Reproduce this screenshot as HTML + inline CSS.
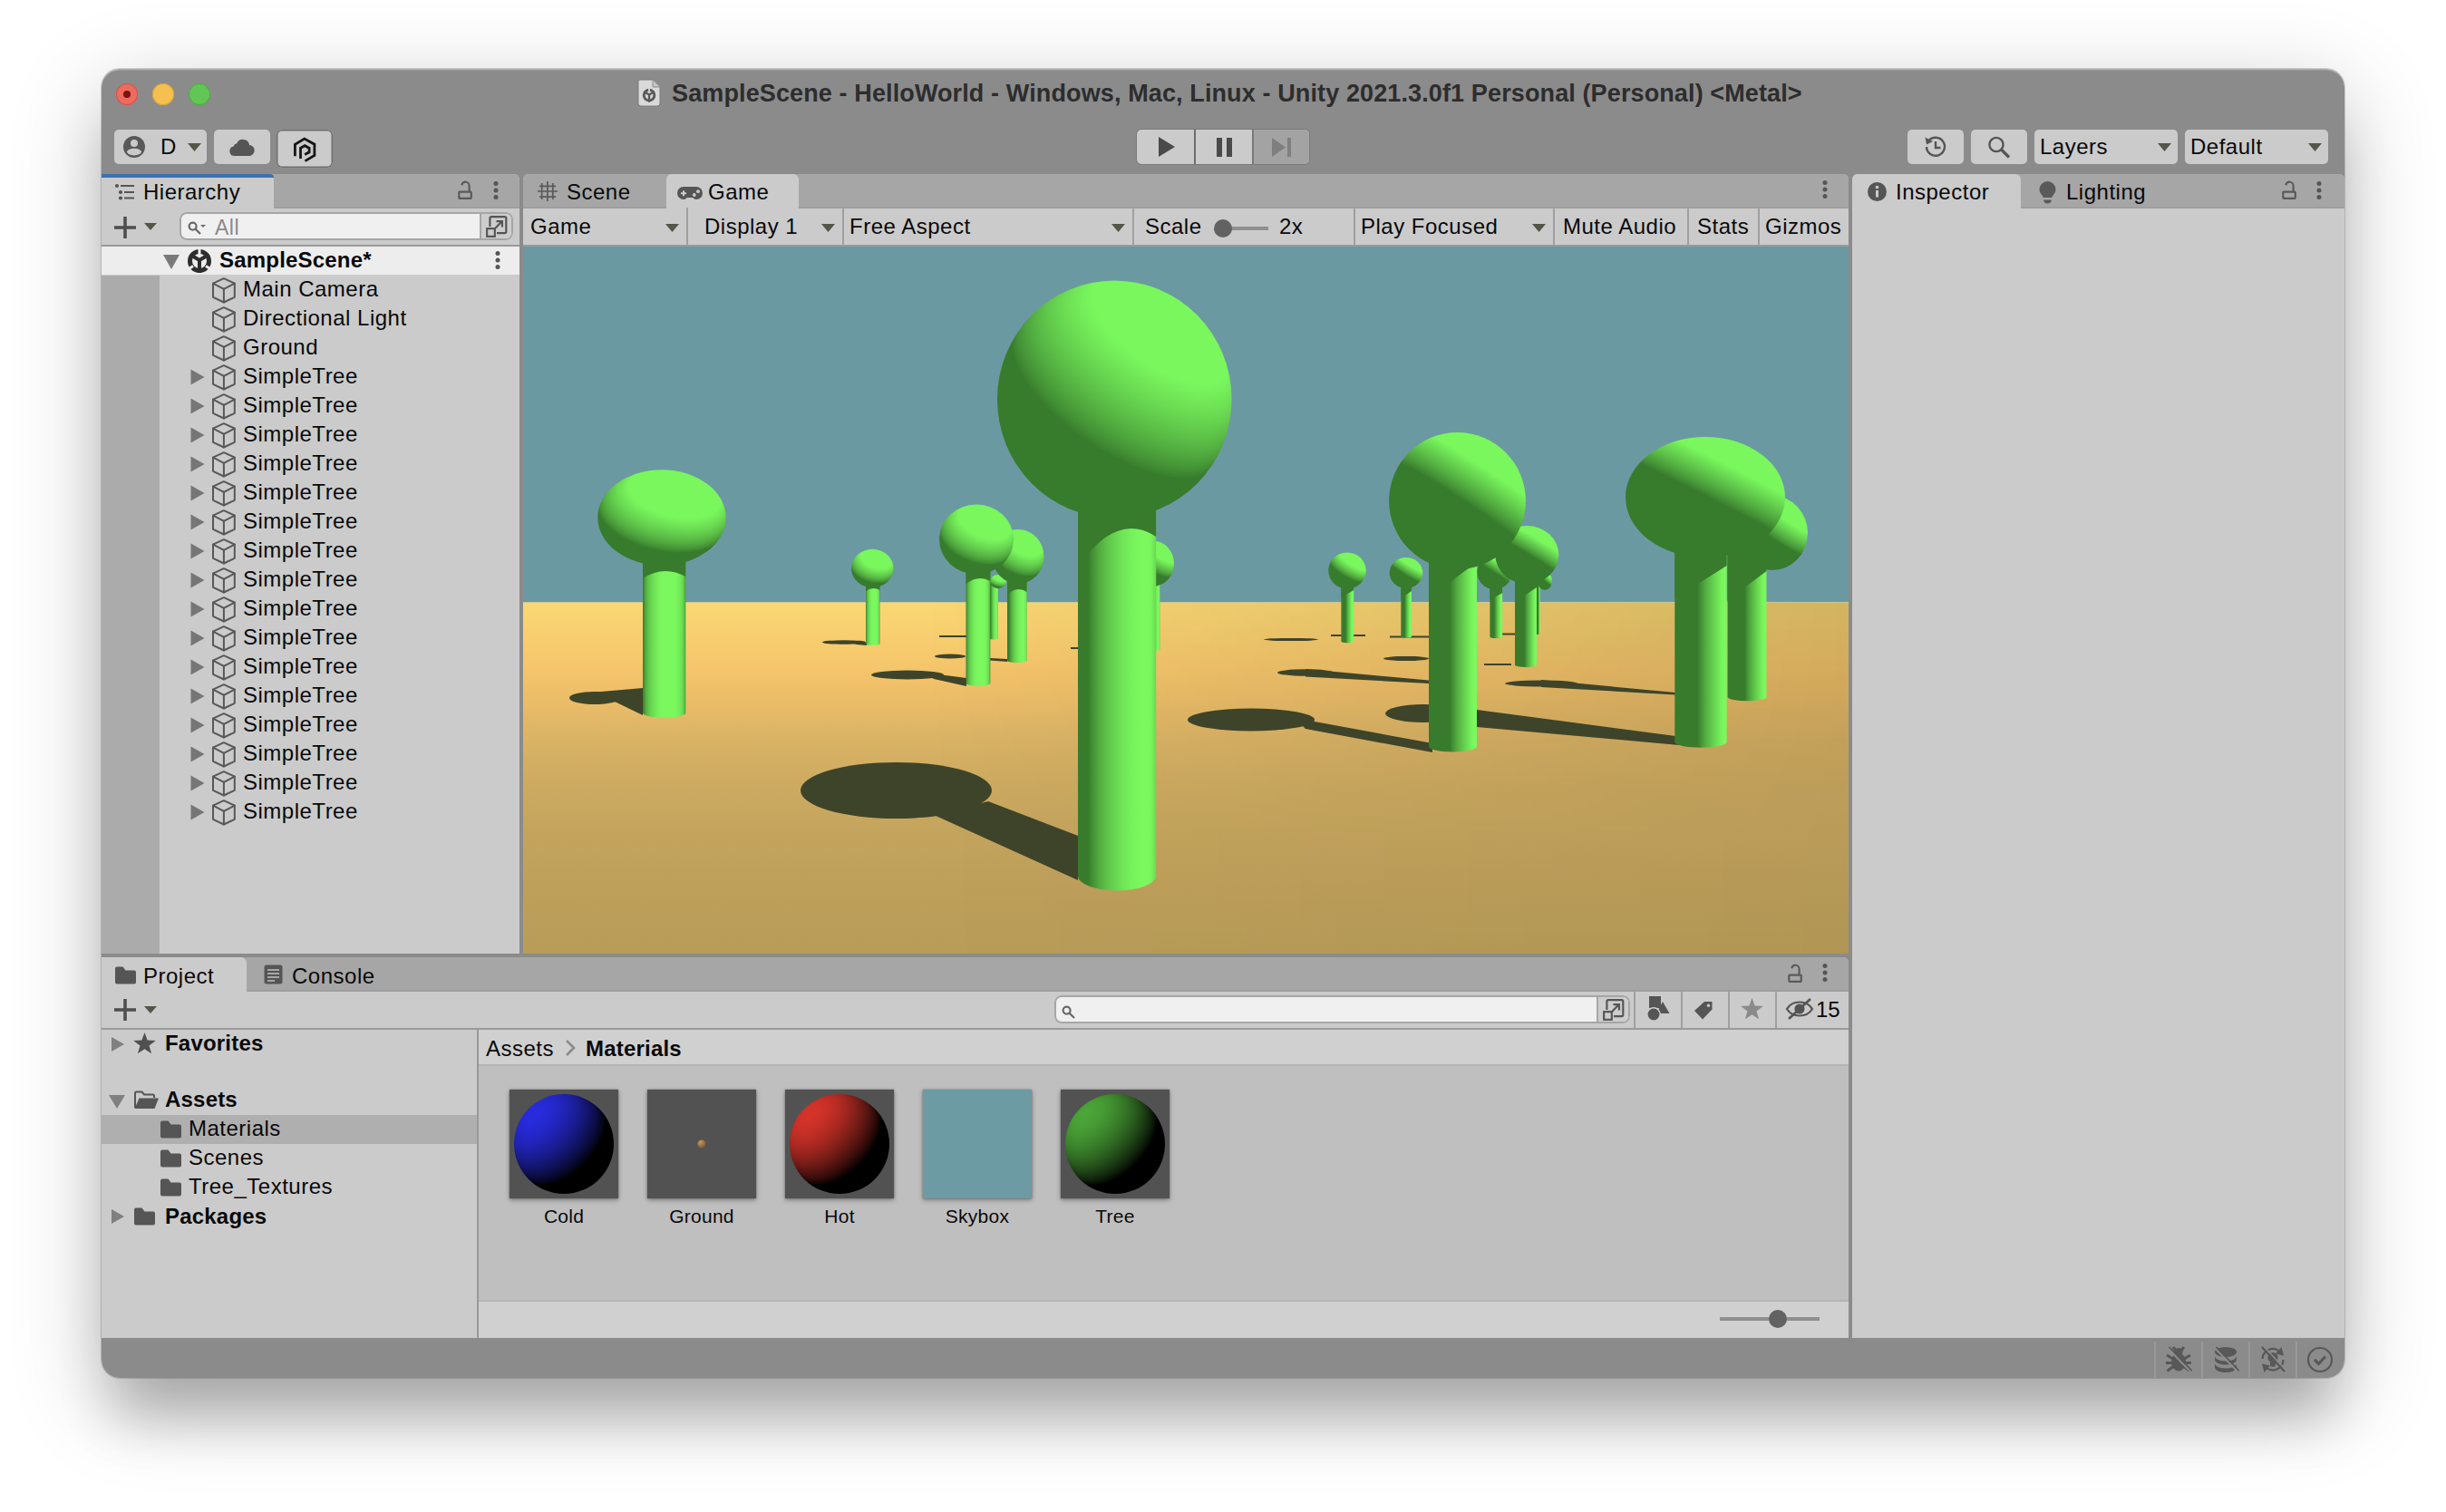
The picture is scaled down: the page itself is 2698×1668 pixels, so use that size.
<!DOCTYPE html><html><head><meta charset="utf-8"><title>Unity</title><style>
html,body{margin:0;padding:0;background:#fff;}
body{width:2698px;height:1668px;position:relative;overflow:hidden;font-family:"Liberation Sans",sans-serif;color:#090909;}
.abs{position:absolute;}
#win{position:absolute;left:112px;top:76px;width:2474px;height:1444px;border-radius:20px;background:#8b8b8b;overflow:hidden;box-shadow:inset 0 1.5px 0 rgba(255,255,255,0.28);}
#shadow{position:absolute;left:112px;top:76px;width:2474px;height:1444px;border-radius:20px;box-shadow:0 0 0 1px rgba(0,0,0,0.16),0 26px 100px rgba(0,0,0,0.235),0 57px 60px -12px rgba(0,0,0,0.20);}
#in{position:absolute;left:-112px;top:-76px;width:2698px;height:1668px;}
.t{font-size:24px;letter-spacing:0.5px;white-space:nowrap;color:#090909;}
.b{font-weight:700;letter-spacing:0.2px;}
.btn{position:absolute;background:#cbcbcb;border-radius:5px;}
.panel{position:absolute;background:#cbcbcb;}
.tabbar{position:absolute;background:#a6a6a6;height:37px;}
.tab{position:absolute;background:#cbcbcb;height:37px;border-radius:6px 6px 0 0;}
.tbb{position:absolute;height:2px;background:#9e9e9e;}
.vline{position:absolute;width:2px;background:#a0a0a0;}
.hline{position:absolute;height:2px;background:#9a9a9a;}
.thumb{box-shadow:0 2px 5px rgba(0,0,0,0.35),0 0 2px rgba(0,0,0,0.3);}
.lbl{font-size:21px;letter-spacing:0.25px;text-align:center;color:#090909;height:28px;line-height:28px;}
.title{position:absolute;left:741px;top:87px;height:32px;line-height:32px;font-size:27px;font-weight:700;letter-spacing:0.12px;color:#2d2d2d;white-space:nowrap;}
</style></head><body>
<svg width="0" height="0" style="position:absolute"><defs>
<radialGradient id="gCold" cx="0.28" cy="0.22" r="0.95"><stop offset="0" stop-color="#2b2fe0"/><stop offset="0.45" stop-color="#16188f"/><stop offset="0.8" stop-color="#06072e"/><stop offset="0.92" stop-color="#000004"/></radialGradient>
<radialGradient id="gHot" cx="0.28" cy="0.22" r="0.95"><stop offset="0" stop-color="#d9352b"/><stop offset="0.45" stop-color="#8e221c"/><stop offset="0.8" stop-color="#2e0806"/><stop offset="0.92" stop-color="#040000"/></radialGradient>
<radialGradient id="gTree" cx="0.28" cy="0.22" r="0.95"><stop offset="0" stop-color="#4da838"/><stop offset="0.45" stop-color="#327724"/><stop offset="0.8" stop-color="#0e2a08"/><stop offset="0.92" stop-color="#000300"/></radialGradient>
<radialGradient id="gdot" cx="0.35" cy="0.3" r="0.8"><stop offset="0" stop-color="#c99a5a"/><stop offset="1" stop-color="#6e5230"/></radialGradient>
</defs></svg>
<div id="shadow"></div><div id="win"><div id="in">
<div class="abs" style="left:128px;top:92px;width:24px;height:24px;border-radius:50%;background:#ed6b5f;box-shadow:inset 0 0 0 1px #d15347"></div>
<div class="abs" style="left:136px;top:100px;width:8px;height:8px;border-radius:50%;background:#7a130b"></div>
<div class="abs" style="left:168px;top:92px;width:24px;height:24px;border-radius:50%;background:#f5c04f;box-shadow:inset 0 0 0 1px #d9a43a"></div>
<div class="abs" style="left:208px;top:92px;width:24px;height:24px;border-radius:50%;background:#62c655;box-shadow:inset 0 0 0 1px #4daa40"></div>
<svg class="abs" style="left:703px;top:87px" width="26" height="31" viewBox="0 0 26 31"><path d="M3 1 H17 L25 9 V27 a3 3 0 0 1 -3 3 H4 a3 3 0 0 1 -3 -3 V3 a2 2 0 0 1 2 -2 Z" fill="#d9d9d9" stroke="#7d7d7d" stroke-width="1"/>
<path d="M17 1 V9 H25" fill="#c4c4c4" stroke="#8d8d8d" stroke-width="1"/>
<g transform="translate(5.5 10) scale(0.58)"><circle cx="13" cy="14" r="10" fill="none" stroke="#5a5a5a" stroke-width="5"/><path d="M13 13 V27 M13 13 L3 7 M13 13 L23 7" stroke="#5a5a5a" stroke-width="4" fill="none"/><path d="M13 0 V8" stroke="#d9d9d9" stroke-width="3"/></g></svg>
<div class="title">SampleScene - HelloWorld - Windows, Mac, Linux - Unity 2021.3.0f1 Personal (Personal) &lt;Metal&gt;</div>
<div class="btn" style="left:126px;top:143px;width:102px;height:38px"></div>
<svg class="abs" style="left:136px;top:150px" width="24" height="24" viewBox="0 0 24 24"><defs><clipPath id="accp"><circle cx="12" cy="12" r="10.2"/></clipPath></defs><circle cx="12" cy="12" r="12" fill="#595959"/><circle cx="12" cy="7.9" r="4" fill="#cbcbcb"/><ellipse cx="12" cy="17.6" rx="8" ry="3.8" fill="#cbcbcb" clip-path="url(#accp)"/></svg>
<div class="t abs" style="left:177px;top:146px;height:32px;line-height:32px;letter-spacing:0">D</div>
<svg class="abs" style="left:207px;top:158px" width="15" height="9" viewBox="0 0 15 9"><path d="M0 0H15L7.5 9Z" fill="#555548"/></svg>
<div class="btn" style="left:236px;top:143px;width:62px;height:38px"></div>
<svg class="abs" style="left:253px;top:152px" width="28" height="20" viewBox="0 0 28 20"><path d="M5.5 20 a5.3 5.3 0 0 1 -0.9 -10.5 a4.2 4.2 0 0 1 3.6 -3.2 a7.3 7.3 0 0 1 13.9 1.6 a6.1 6.1 0 0 1 0.4 12.1 Z" fill="#555"/></svg>
<div class="btn" style="left:305px;top:143px;width:62px;height:42px;box-shadow:inset 0 0 0 1.5px #707070;border-radius:6px"></div>
<svg class="abs" style="left:322px;top:150px" width="28" height="29" viewBox="0 0 28 29"><g fill="none" stroke="#161616" stroke-width="2.8" stroke-linejoin="miter"><path d="M3.4 22.3 V9.2 L13.8 3.1 L24.9 9.2 V21.5 L14.5 27.6"/><path d="M9.5 25.1 V13.4 L14.2 10.7 L19.1 13.4 V17.8 L14.2 20.5"/></g></svg>
<div class="btn" style="left:1254px;top:143px;width:190px;height:38px;background:#cbcbcb;box-shadow:0 0 0 1px #7a7a7a"></div>
<div class="abs" style="left:1383px;top:143px;width:61px;height:38px;background:#a3a3a3;border-radius:0 5px 5px 0"></div>
<div class="abs" style="left:1317px;top:143px;width:2px;height:38px;background:#6f6f6f"></div>
<div class="abs" style="left:1381px;top:143px;width:2px;height:38px;background:#7a7a7a"></div>
<svg class="abs" style="left:1277px;top:151px" width="20" height="22" viewBox="0 0 20 22"><path d="M1 0 L19 11 L1 22Z" fill="#4a4a4a"/></svg>
<svg class="abs" style="left:1341px;top:152px" width="20" height="21" viewBox="0 0 20 21"><rect x="1" y="0" width="6" height="21" fill="#4a4a4a"/><rect x="12" y="0" width="6" height="21" fill="#4a4a4a"/></svg>
<svg class="abs" style="left:1403px;top:152px" width="22" height="21" viewBox="0 0 22 21"><path d="M0 0 L15 10.5 L0 21Z" fill="#7f7f7f"/><rect x="17" y="0" width="4" height="21" fill="#7f7f7f"/></svg>
<div class="btn" style="left:2104px;top:143px;width:62px;height:38px"></div>
<svg class="abs" style="left:2122px;top:149px" width="26" height="26" viewBox="0 0 26 26"><g fill="none" stroke="#555" stroke-width="2.4"><path d="M5.2 6.5 A10 10 0 1 1 3 13"/><path d="M13 7 V14 H18.5"/></g><path d="M1.5 2.5 L3 10.5 L10 7 Z" fill="#555"/></svg>
<div class="btn" style="left:2174px;top:143px;width:62px;height:38px"></div>
<svg class="abs" style="left:2192px;top:150px" width="26" height="26" viewBox="0 0 26 26"><g fill="none" stroke="#555" stroke-width="2.4"><circle cx="10" cy="9.5" r="7.6"/><path d="M15.5 15 L24 23.5" stroke-width="3.2"/></g></svg>
<div class="btn" style="left:2244px;top:143px;width:158px;height:38px"></div>
<div class="t abs" style="left:2250px;top:146px;height:32px;line-height:32px">Layers</div>
<svg class="abs" style="left:2380px;top:158px" width="15" height="9" viewBox="0 0 15 9"><path d="M0 0H15L7.5 9Z" fill="#555548"/></svg>
<div class="btn" style="left:2410px;top:143px;width:158px;height:38px"></div>
<div class="t abs" style="left:2416px;top:146px;height:32px;line-height:32px">Default</div>
<svg class="abs" style="left:2546px;top:158px" width="15" height="9" viewBox="0 0 15 9"><path d="M0 0H15L7.5 9Z" fill="#555548"/></svg>
<div class="panel" style="left:112px;top:192px;width:461px;height:860px;border-radius:6px 6px 0 0"></div>
<div class="tabbar" style="left:112px;top:192px;width:461px;border-radius:0 6px 0 0"></div>
<div class="tab" style="left:112px;top:192px;width:190px;border-radius:0 6px 0 0"></div>
<div class="abs" style="left:112px;top:192px;width:190px;height:4px;background:#3a72b0;border-radius:0 6px 0 0"></div>
<svg class="abs" style="left:126px;top:202px" width="24" height="20" viewBox="0 0 24 20"><g fill="#555"><circle cx="3" cy="3" r="2.1"/><circle cx="7" cy="10" r="2.1"/><circle cx="7" cy="16.5" r="2.1"/></g><g stroke="#555" stroke-width="2"><path d="M7 3H22M11 10H22M11 16.5H22"/></g></svg>
<div class="t abs" style="left:158px;top:196px;height:32px;line-height:32px">Hierarchy</div>
<svg class="abs" style="left:503px;top:199px" width="18" height="22" viewBox="0 0 18 22"><g fill="none" stroke="#5a5a5a" stroke-width="2.2"><rect x="3.3" y="12.6" width="13.5" height="7.2" rx="0.8"/><path d="M14.6 12 V6.4 A4.2 4.4 0 0 0 6.3 5.2"/></g></svg>
<svg class="abs" style="left:543px;top:199px" width="8" height="24" viewBox="0 0 8 24"><circle cx="4" cy="3.5" r="2.5" fill="#555"/><circle cx="4" cy="10.9" r="2.5" fill="#555"/><circle cx="4" cy="18.4" r="2.5" fill="#555"/></svg>
<div class="tbb" style="left:302px;top:228px;width:271px"></div>
<div class="hline" style="left:112px;top:270px;width:461px"></div>
<svg class="abs" style="left:125px;top:238px" width="26" height="26" viewBox="0 0 26 26"><path d="M13 1V25M1 13H25" stroke="#4e4e4e" stroke-width="3.6" fill="none"/></svg>
<svg class="abs" style="left:159px;top:246px" width="14" height="8" viewBox="0 0 14 8"><path d="M0 0H14L7 8Z" fill="#555548"/></svg>
<div class="abs" style="left:198px;top:234px;width:368px;height:31px;border-radius:8px;background:#f0f0f0;box-shadow:inset 0 0 0 2px #a6a6a6"></div>
<div class="abs" style="left:529px;top:236px;width:35px;height:27px;border-radius:0 6px 6px 0;background:#cdcdcd;border-left:2px solid #a6a6a6;box-sizing:border-box"></div>
<svg class="abs" style="left:535px;top:237px" width="26" height="26" viewBox="0 0 24 24"><g fill="none" stroke="#555" stroke-width="2"><path d="M5 12 V3.5 a1.5 1.5 0 0 1 1.5 -1.5 H20 a1.5 1.5 0 0 1 1.5 1.5 V17 a1.5 1.5 0 0 1 -1.5 1.5 H12"/><rect x="2" y="14" width="8" height="8" fill="#cdcdcd"/><path d="M10 14 L17 7 M11.5 6.5 H17.5 V12.5"/></g></svg>
<svg class="abs" style="left:207px;top:241px" width="20" height="18" viewBox="0 0 20 18"><g fill="none" stroke="#6a6a6a" stroke-width="2.2"><circle cx="5.6" cy="8.6" r="4"/><path d="M8.6 11.6 L14 17" stroke-linecap="butt"/></g><path d="M14 7H20L17 10Z" fill="#6a6a6a"/></svg>
<div class="t abs" style="left:237px;top:235px;height:32px;line-height:32px;color:#8a8a8a;font-size:23px">All</div>
<div class="abs" style="left:112px;top:304px;width:64px;height:748px;background:#ababab"></div>
<div class="abs" style="left:112px;top:272px;width:461px;height:31px;background:#ededed"></div>
<svg class="abs" style="left:180px;top:281px" width="18" height="16" viewBox="0 0 18 16"><path d="M0 0H18L9 16Z" fill="#7a7a7a"/></svg>
<svg class="abs" style="left:207px;top:274px" width="26" height="28" viewBox="0 0 26 28"><g><circle cx="13" cy="14" r="10.5" fill="none" stroke="#2d2d2d" stroke-width="5"/>
<path d="M13 13 V27 M13 13 L3 7 M13 13 L23 7" stroke="#2d2d2d" stroke-width="4" fill="none"/>
<path d="M13 0 V8" stroke="#ededed" stroke-width="3"/><path d="M2 22 L6 19.5 M24 22 L20 19.5" stroke="#ededed" stroke-width="3"/></g></svg>
<div class="t b abs" style="left:242px;top:271px;height:32px;line-height:32px">SampleScene*</div>
<svg class="abs" style="left:545px;top:276px" width="8" height="24" viewBox="0 0 8 24"><circle cx="4" cy="3.5" r="2.5" fill="#555"/><circle cx="4" cy="10.9" r="2.5" fill="#555"/><circle cx="4" cy="18.4" r="2.5" fill="#555"/></svg>
<svg class="abs" style="left:233px;top:306px" width="28" height="29" viewBox="0 0 28 29"><g fill="none" stroke="#585858" stroke-width="2" stroke-linejoin="round" stroke-linecap="round"><path d="M13.9 1.2 L25.8 6.6 V21.8 L13.9 27.5 L2 21.8 V6.6 Z"/><path d="M2 6.6 L13.9 12.8 L25.8 6.6 M13.9 12.8 V27.5"/></g></svg><div class="t abs" style="left:268px;top:303px;height:32px;line-height:32px">Main Camera</div>
<svg class="abs" style="left:233px;top:338px" width="28" height="29" viewBox="0 0 28 29"><g fill="none" stroke="#585858" stroke-width="2" stroke-linejoin="round" stroke-linecap="round"><path d="M13.9 1.2 L25.8 6.6 V21.8 L13.9 27.5 L2 21.8 V6.6 Z"/><path d="M2 6.6 L13.9 12.8 L25.8 6.6 M13.9 12.8 V27.5"/></g></svg><div class="t abs" style="left:268px;top:335px;height:32px;line-height:32px">Directional Light</div>
<svg class="abs" style="left:233px;top:370px" width="28" height="29" viewBox="0 0 28 29"><g fill="none" stroke="#585858" stroke-width="2" stroke-linejoin="round" stroke-linecap="round"><path d="M13.9 1.2 L25.8 6.6 V21.8 L13.9 27.5 L2 21.8 V6.6 Z"/><path d="M2 6.6 L13.9 12.8 L25.8 6.6 M13.9 12.8 V27.5"/></g></svg><div class="t abs" style="left:268px;top:367px;height:32px;line-height:32px">Ground</div>
<svg class="abs" style="left:210px;top:407px" width="16" height="18" viewBox="0 0 16 18"><path d="M0.5 0.5 L15.5 9 L0.5 17.5 Z" fill="#767676"/></svg><svg class="abs" style="left:233px;top:402px" width="28" height="29" viewBox="0 0 28 29"><g fill="none" stroke="#585858" stroke-width="2" stroke-linejoin="round" stroke-linecap="round"><path d="M13.9 1.2 L25.8 6.6 V21.8 L13.9 27.5 L2 21.8 V6.6 Z"/><path d="M2 6.6 L13.9 12.8 L25.8 6.6 M13.9 12.8 V27.5"/></g></svg><div class="t abs" style="left:268px;top:399px;height:32px;line-height:32px">SimpleTree</div>
<svg class="abs" style="left:210px;top:439px" width="16" height="18" viewBox="0 0 16 18"><path d="M0.5 0.5 L15.5 9 L0.5 17.5 Z" fill="#767676"/></svg><svg class="abs" style="left:233px;top:434px" width="28" height="29" viewBox="0 0 28 29"><g fill="none" stroke="#585858" stroke-width="2" stroke-linejoin="round" stroke-linecap="round"><path d="M13.9 1.2 L25.8 6.6 V21.8 L13.9 27.5 L2 21.8 V6.6 Z"/><path d="M2 6.6 L13.9 12.8 L25.8 6.6 M13.9 12.8 V27.5"/></g></svg><div class="t abs" style="left:268px;top:431px;height:32px;line-height:32px">SimpleTree</div>
<svg class="abs" style="left:210px;top:471px" width="16" height="18" viewBox="0 0 16 18"><path d="M0.5 0.5 L15.5 9 L0.5 17.5 Z" fill="#767676"/></svg><svg class="abs" style="left:233px;top:466px" width="28" height="29" viewBox="0 0 28 29"><g fill="none" stroke="#585858" stroke-width="2" stroke-linejoin="round" stroke-linecap="round"><path d="M13.9 1.2 L25.8 6.6 V21.8 L13.9 27.5 L2 21.8 V6.6 Z"/><path d="M2 6.6 L13.9 12.8 L25.8 6.6 M13.9 12.8 V27.5"/></g></svg><div class="t abs" style="left:268px;top:463px;height:32px;line-height:32px">SimpleTree</div>
<svg class="abs" style="left:210px;top:503px" width="16" height="18" viewBox="0 0 16 18"><path d="M0.5 0.5 L15.5 9 L0.5 17.5 Z" fill="#767676"/></svg><svg class="abs" style="left:233px;top:498px" width="28" height="29" viewBox="0 0 28 29"><g fill="none" stroke="#585858" stroke-width="2" stroke-linejoin="round" stroke-linecap="round"><path d="M13.9 1.2 L25.8 6.6 V21.8 L13.9 27.5 L2 21.8 V6.6 Z"/><path d="M2 6.6 L13.9 12.8 L25.8 6.6 M13.9 12.8 V27.5"/></g></svg><div class="t abs" style="left:268px;top:495px;height:32px;line-height:32px">SimpleTree</div>
<svg class="abs" style="left:210px;top:535px" width="16" height="18" viewBox="0 0 16 18"><path d="M0.5 0.5 L15.5 9 L0.5 17.5 Z" fill="#767676"/></svg><svg class="abs" style="left:233px;top:530px" width="28" height="29" viewBox="0 0 28 29"><g fill="none" stroke="#585858" stroke-width="2" stroke-linejoin="round" stroke-linecap="round"><path d="M13.9 1.2 L25.8 6.6 V21.8 L13.9 27.5 L2 21.8 V6.6 Z"/><path d="M2 6.6 L13.9 12.8 L25.8 6.6 M13.9 12.8 V27.5"/></g></svg><div class="t abs" style="left:268px;top:527px;height:32px;line-height:32px">SimpleTree</div>
<svg class="abs" style="left:210px;top:567px" width="16" height="18" viewBox="0 0 16 18"><path d="M0.5 0.5 L15.5 9 L0.5 17.5 Z" fill="#767676"/></svg><svg class="abs" style="left:233px;top:562px" width="28" height="29" viewBox="0 0 28 29"><g fill="none" stroke="#585858" stroke-width="2" stroke-linejoin="round" stroke-linecap="round"><path d="M13.9 1.2 L25.8 6.6 V21.8 L13.9 27.5 L2 21.8 V6.6 Z"/><path d="M2 6.6 L13.9 12.8 L25.8 6.6 M13.9 12.8 V27.5"/></g></svg><div class="t abs" style="left:268px;top:559px;height:32px;line-height:32px">SimpleTree</div>
<svg class="abs" style="left:210px;top:599px" width="16" height="18" viewBox="0 0 16 18"><path d="M0.5 0.5 L15.5 9 L0.5 17.5 Z" fill="#767676"/></svg><svg class="abs" style="left:233px;top:594px" width="28" height="29" viewBox="0 0 28 29"><g fill="none" stroke="#585858" stroke-width="2" stroke-linejoin="round" stroke-linecap="round"><path d="M13.9 1.2 L25.8 6.6 V21.8 L13.9 27.5 L2 21.8 V6.6 Z"/><path d="M2 6.6 L13.9 12.8 L25.8 6.6 M13.9 12.8 V27.5"/></g></svg><div class="t abs" style="left:268px;top:591px;height:32px;line-height:32px">SimpleTree</div>
<svg class="abs" style="left:210px;top:631px" width="16" height="18" viewBox="0 0 16 18"><path d="M0.5 0.5 L15.5 9 L0.5 17.5 Z" fill="#767676"/></svg><svg class="abs" style="left:233px;top:626px" width="28" height="29" viewBox="0 0 28 29"><g fill="none" stroke="#585858" stroke-width="2" stroke-linejoin="round" stroke-linecap="round"><path d="M13.9 1.2 L25.8 6.6 V21.8 L13.9 27.5 L2 21.8 V6.6 Z"/><path d="M2 6.6 L13.9 12.8 L25.8 6.6 M13.9 12.8 V27.5"/></g></svg><div class="t abs" style="left:268px;top:623px;height:32px;line-height:32px">SimpleTree</div>
<svg class="abs" style="left:210px;top:663px" width="16" height="18" viewBox="0 0 16 18"><path d="M0.5 0.5 L15.5 9 L0.5 17.5 Z" fill="#767676"/></svg><svg class="abs" style="left:233px;top:658px" width="28" height="29" viewBox="0 0 28 29"><g fill="none" stroke="#585858" stroke-width="2" stroke-linejoin="round" stroke-linecap="round"><path d="M13.9 1.2 L25.8 6.6 V21.8 L13.9 27.5 L2 21.8 V6.6 Z"/><path d="M2 6.6 L13.9 12.8 L25.8 6.6 M13.9 12.8 V27.5"/></g></svg><div class="t abs" style="left:268px;top:655px;height:32px;line-height:32px">SimpleTree</div>
<svg class="abs" style="left:210px;top:695px" width="16" height="18" viewBox="0 0 16 18"><path d="M0.5 0.5 L15.5 9 L0.5 17.5 Z" fill="#767676"/></svg><svg class="abs" style="left:233px;top:690px" width="28" height="29" viewBox="0 0 28 29"><g fill="none" stroke="#585858" stroke-width="2" stroke-linejoin="round" stroke-linecap="round"><path d="M13.9 1.2 L25.8 6.6 V21.8 L13.9 27.5 L2 21.8 V6.6 Z"/><path d="M2 6.6 L13.9 12.8 L25.8 6.6 M13.9 12.8 V27.5"/></g></svg><div class="t abs" style="left:268px;top:687px;height:32px;line-height:32px">SimpleTree</div>
<svg class="abs" style="left:210px;top:727px" width="16" height="18" viewBox="0 0 16 18"><path d="M0.5 0.5 L15.5 9 L0.5 17.5 Z" fill="#767676"/></svg><svg class="abs" style="left:233px;top:722px" width="28" height="29" viewBox="0 0 28 29"><g fill="none" stroke="#585858" stroke-width="2" stroke-linejoin="round" stroke-linecap="round"><path d="M13.9 1.2 L25.8 6.6 V21.8 L13.9 27.5 L2 21.8 V6.6 Z"/><path d="M2 6.6 L13.9 12.8 L25.8 6.6 M13.9 12.8 V27.5"/></g></svg><div class="t abs" style="left:268px;top:719px;height:32px;line-height:32px">SimpleTree</div>
<svg class="abs" style="left:210px;top:759px" width="16" height="18" viewBox="0 0 16 18"><path d="M0.5 0.5 L15.5 9 L0.5 17.5 Z" fill="#767676"/></svg><svg class="abs" style="left:233px;top:754px" width="28" height="29" viewBox="0 0 28 29"><g fill="none" stroke="#585858" stroke-width="2" stroke-linejoin="round" stroke-linecap="round"><path d="M13.9 1.2 L25.8 6.6 V21.8 L13.9 27.5 L2 21.8 V6.6 Z"/><path d="M2 6.6 L13.9 12.8 L25.8 6.6 M13.9 12.8 V27.5"/></g></svg><div class="t abs" style="left:268px;top:751px;height:32px;line-height:32px">SimpleTree</div>
<svg class="abs" style="left:210px;top:791px" width="16" height="18" viewBox="0 0 16 18"><path d="M0.5 0.5 L15.5 9 L0.5 17.5 Z" fill="#767676"/></svg><svg class="abs" style="left:233px;top:786px" width="28" height="29" viewBox="0 0 28 29"><g fill="none" stroke="#585858" stroke-width="2" stroke-linejoin="round" stroke-linecap="round"><path d="M13.9 1.2 L25.8 6.6 V21.8 L13.9 27.5 L2 21.8 V6.6 Z"/><path d="M2 6.6 L13.9 12.8 L25.8 6.6 M13.9 12.8 V27.5"/></g></svg><div class="t abs" style="left:268px;top:783px;height:32px;line-height:32px">SimpleTree</div>
<svg class="abs" style="left:210px;top:823px" width="16" height="18" viewBox="0 0 16 18"><path d="M0.5 0.5 L15.5 9 L0.5 17.5 Z" fill="#767676"/></svg><svg class="abs" style="left:233px;top:818px" width="28" height="29" viewBox="0 0 28 29"><g fill="none" stroke="#585858" stroke-width="2" stroke-linejoin="round" stroke-linecap="round"><path d="M13.9 1.2 L25.8 6.6 V21.8 L13.9 27.5 L2 21.8 V6.6 Z"/><path d="M2 6.6 L13.9 12.8 L25.8 6.6 M13.9 12.8 V27.5"/></g></svg><div class="t abs" style="left:268px;top:815px;height:32px;line-height:32px">SimpleTree</div>
<svg class="abs" style="left:210px;top:855px" width="16" height="18" viewBox="0 0 16 18"><path d="M0.5 0.5 L15.5 9 L0.5 17.5 Z" fill="#767676"/></svg><svg class="abs" style="left:233px;top:850px" width="28" height="29" viewBox="0 0 28 29"><g fill="none" stroke="#585858" stroke-width="2" stroke-linejoin="round" stroke-linecap="round"><path d="M13.9 1.2 L25.8 6.6 V21.8 L13.9 27.5 L2 21.8 V6.6 Z"/><path d="M2 6.6 L13.9 12.8 L25.8 6.6 M13.9 12.8 V27.5"/></g></svg><div class="t abs" style="left:268px;top:847px;height:32px;line-height:32px">SimpleTree</div>
<svg class="abs" style="left:210px;top:887px" width="16" height="18" viewBox="0 0 16 18"><path d="M0.5 0.5 L15.5 9 L0.5 17.5 Z" fill="#767676"/></svg><svg class="abs" style="left:233px;top:882px" width="28" height="29" viewBox="0 0 28 29"><g fill="none" stroke="#585858" stroke-width="2" stroke-linejoin="round" stroke-linecap="round"><path d="M13.9 1.2 L25.8 6.6 V21.8 L13.9 27.5 L2 21.8 V6.6 Z"/><path d="M2 6.6 L13.9 12.8 L25.8 6.6 M13.9 12.8 V27.5"/></g></svg><div class="t abs" style="left:268px;top:879px;height:32px;line-height:32px">SimpleTree</div>
<div class="panel" style="left:577px;top:192px;width:1462px;height:860px;border-radius:6px 6px 0 0"></div>
<div class="tabbar" style="left:577px;top:192px;width:1462px;border-radius:6px 6px 0 0"></div>
<div class="tab" style="left:735px;top:192px;width:146px"></div>
<svg class="abs" style="left:593px;top:200px" width="22" height="22" viewBox="0 0 22 22"><g stroke="#5a5a5a" stroke-width="1.7" fill="none"><path d="M4.7 2V20M16.8 2V20M10.9 0V22M2 5.4H20M2 17.2H20M0 11H22"/></g></svg>
<div class="t abs" style="left:625px;top:196px;height:32px;line-height:32px">Scene</div>
<svg class="abs" style="left:747px;top:206px" width="28" height="14" viewBox="0 0 28 14"><path d="M7 0 H21 a7 7 0 0 1 0 14 C18.5 14 18 12 16.5 12 H11.5 C10 12 9.5 14 7 14 a7 7 0 0 1 0 -14Z" fill="#555"/><path d="M7 4.2V10.2M4 7.2H10" stroke="#cbcbcb" stroke-width="1.9"/><circle cx="23" cy="5.2" r="1.9" fill="#cbcbcb"/><circle cx="18.8" cy="9" r="1.9" fill="#cbcbcb"/></svg>
<div class="t abs" style="left:781px;top:196px;height:32px;line-height:32px">Game</div>
<svg class="abs" style="left:2009px;top:198px" width="8" height="24" viewBox="0 0 8 24"><circle cx="4" cy="3.5" r="2.5" fill="#555"/><circle cx="4" cy="10.9" r="2.5" fill="#555"/><circle cx="4" cy="18.4" r="2.5" fill="#555"/></svg>
<div class="tbb" style="left:577px;top:228px;width:158px"></div><div class="tbb" style="left:881px;top:228px;width:1158px"></div>
<div class="hline" style="left:577px;top:270px;width:1462px"></div>
<div class="vline" style="left:757px;top:229px;height:41px"></div>
<div class="vline" style="left:929px;top:229px;height:41px"></div>
<div class="vline" style="left:1249px;top:229px;height:41px"></div>
<div class="vline" style="left:1493px;top:229px;height:41px"></div>
<div class="vline" style="left:1713px;top:229px;height:41px"></div>
<div class="vline" style="left:1861px;top:229px;height:41px"></div>
<div class="vline" style="left:1939px;top:229px;height:41px"></div>
<div class="t abs" style="left:585px;top:234px;height:32px;line-height:32px;">Game</div>
<svg class="abs" style="left:734px;top:247px" width="15" height="9" viewBox="0 0 15 9"><path d="M0 0H15L7.5 9Z" fill="#555548"/></svg>
<div class="t abs" style="left:777px;top:234px;height:32px;line-height:32px;">Display 1</div>
<svg class="abs" style="left:906px;top:247px" width="15" height="9" viewBox="0 0 15 9"><path d="M0 0H15L7.5 9Z" fill="#555548"/></svg>
<div class="t abs" style="left:937px;top:234px;height:32px;line-height:32px;">Free Aspect</div>
<svg class="abs" style="left:1226px;top:247px" width="15" height="9" viewBox="0 0 15 9"><path d="M0 0H15L7.5 9Z" fill="#555548"/></svg>
<div class="t abs" style="left:1263px;top:234px;height:32px;line-height:32px;">Scale</div>
<div class="abs" style="left:1349px;top:250px;width:50px;height:4px;background:#8f8f8f"></div>
<div class="abs" style="left:1339px;top:242px;width:20px;height:20px;border-radius:50%;background:#626262"></div>
<div class="t abs" style="left:1411px;top:234px;height:32px;line-height:32px;">2x</div>
<div class="t abs" style="left:1501px;top:234px;height:32px;line-height:32px;">Play Focused</div>
<svg class="abs" style="left:1690px;top:247px" width="15" height="9" viewBox="0 0 15 9"><path d="M0 0H15L7.5 9Z" fill="#555548"/></svg>
<div class="t abs" style="left:1724px;top:234px;height:32px;line-height:32px;">Mute Audio</div>
<div class="t abs" style="left:1872px;top:234px;height:32px;line-height:32px;">Stats</div>
<div class="t abs" style="left:1947px;top:234px;height:32px;line-height:32px;">Gizmos</div>
<svg class="abs" style="left:577px;top:272px" width="1462" height="780" viewBox="577 272 1462 780"><defs><radialGradient id="zg" cx="0.5" cy="0.5" r="0.5"><stop offset="0" stop-color="rgb(0,255,0)"/><stop offset="0.15" stop-color="rgb(0,252,0)"/><stop offset="0.3" stop-color="rgb(0,243,0)"/><stop offset="0.42" stop-color="rgb(0,231,0)"/><stop offset="0.54" stop-color="rgb(0,215,0)"/><stop offset="0.64" stop-color="rgb(0,196,0)"/><stop offset="0.72" stop-color="rgb(0,177,0)"/><stop offset="0.79" stop-color="rgb(0,156,0)"/><stop offset="0.85" stop-color="rgb(0,134,0)"/><stop offset="0.9" stop-color="rgb(0,111,0)"/><stop offset="0.94" stop-color="rgb(0,87,0)"/><stop offset="0.97" stop-color="rgb(0,62,0)"/><stop offset="0.99" stop-color="rgb(0,36,0)"/><stop offset="1" stop-color="rgb(0,0,0)"/></radialGradient><linearGradient id="ground" x1="0" y1="0" x2="0" y2="1"><stop offset="0" stop-color="#fad873"/><stop offset="0.06" stop-color="#f9d271"/><stop offset="0.189" stop-color="#f5c56b"/><stop offset="0.256" stop-color="#eebf69"/><stop offset="0.39" stop-color="#dab365"/><stop offset="0.524" stop-color="#ccaa60"/><stop offset="0.657" stop-color="#c4a45d"/><stop offset="0.79" stop-color="#bfa05b"/><stop offset="1" stop-color="#b89c58"/></linearGradient><linearGradient id="groundx" x1="0" y1="0" x2="1" y2="0"><stop offset="0" stop-color="#000" stop-opacity="0"/><stop offset="0.3" stop-color="#000" stop-opacity="0"/><stop offset="1" stop-color="#000" stop-opacity="1"/></linearGradient><linearGradient id="gm" x1="0" y1="0" x2="0" y2="1"><stop offset="0" stop-color="#fff" stop-opacity="0.16"/><stop offset="0.33" stop-color="#fff" stop-opacity="0.115"/><stop offset="0.66" stop-color="#fff" stop-opacity="0.045"/><stop offset="1" stop-color="#fff" stop-opacity="0.04"/></linearGradient><mask id="gmask" maskUnits="userSpaceOnUse" x="577" y="664.5" width="1462" height="387.5"><rect x="577" y="664.5" width="1462" height="387.5" fill="url(#gm)"/></mask><linearGradient id="tg1" x1="0" y1="0" x2="1" y2="0"><stop offset="0.0000" stop-color="#387b2d"/><stop offset="0.0625" stop-color="#387b2d"/><stop offset="0.1250" stop-color="#428e35"/><stop offset="0.1875" stop-color="#4ea53d"/><stop offset="0.2500" stop-color="#57b644"/><stop offset="0.3125" stop-color="#5fc54a"/><stop offset="0.3750" stop-color="#65d14f"/><stop offset="0.4375" stop-color="#6adb52"/><stop offset="0.5000" stop-color="#6fe356"/><stop offset="0.5625" stop-color="#73ea59"/><stop offset="0.6250" stop-color="#76f05b"/><stop offset="0.6875" stop-color="#78f45c"/><stop offset="0.7500" stop-color="#79f65d"/><stop offset="0.8125" stop-color="#79f65d"/><stop offset="0.8750" stop-color="#78f35c"/><stop offset="0.9375" stop-color="#73ec59"/><stop offset="1.0000" stop-color="#61c84b"/></linearGradient><filter id="lf2" color-interpolation-filters="sRGB" x="-0.02" y="-0.02" width="1.04" height="1.04"><feColorMatrix type="matrix" values="2.2857 0.8571 0 0 -1.1429 2.2857 0.8571 0 0 -1.1429 2.2857 0.8571 0 0 -1.1429 0 0 0 1 0"/><feComponentTransfer><feFuncR type="table" tableValues="0.2196 0.2399 0.2562 0.2712 0.2855 0.2993 0.3126 0.3256 0.3384 0.3509 0.3632 0.3753 0.3873 0.3991 0.4107 0.4223 0.4337 0.4450 0.4563 0.4674 0.4784"/><feFuncG type="table" tableValues="0.4824 0.5208 0.5516 0.5801 0.6072 0.6332 0.6585 0.6832 0.7073 0.7310 0.7543 0.7773 0.7999 0.8222 0.8443 0.8662 0.8879 0.9093 0.9306 0.9516 0.9725"/><feFuncB type="table" tableValues="0.1765 0.1915 0.2036 0.2148 0.2254 0.2356 0.2455 0.2552 0.2647 0.2739 0.2831 0.2921 0.3009 0.3097 0.3184 0.3269 0.3354 0.3438 0.3522 0.3604 0.3686"/></feComponentTransfer></filter><linearGradient id="lg3" x1="0.3290" y1="0.9698" x2="0.6710" y2="0.0302"><stop offset="0" stop-color="#000"/><stop offset="1" stop-color="#f00"/></linearGradient><clipPath id="cp4"><ellipse cx="1101" cy="641.5" rx="9" ry="7.5"/></clipPath><linearGradient id="tg5" x1="0" y1="0" x2="1" y2="0"><stop offset="0.0000" stop-color="#387b2d"/><stop offset="0.0625" stop-color="#387b2d"/><stop offset="0.1250" stop-color="#428e35"/><stop offset="0.1875" stop-color="#4ea53d"/><stop offset="0.2500" stop-color="#57b644"/><stop offset="0.3125" stop-color="#5fc54a"/><stop offset="0.3750" stop-color="#65d14f"/><stop offset="0.4375" stop-color="#6adb52"/><stop offset="0.5000" stop-color="#6fe356"/><stop offset="0.5625" stop-color="#73ea59"/><stop offset="0.6250" stop-color="#76f05b"/><stop offset="0.6875" stop-color="#78f45c"/><stop offset="0.7500" stop-color="#79f65d"/><stop offset="0.8125" stop-color="#79f65d"/><stop offset="0.8750" stop-color="#78f35c"/><stop offset="0.9375" stop-color="#73ec59"/><stop offset="1.0000" stop-color="#61c84b"/></linearGradient><filter id="lf6" color-interpolation-filters="sRGB" x="-0.02" y="-0.02" width="1.04" height="1.04"><feColorMatrix type="matrix" values="2.2857 0.8571 0 0 -1.1429 2.2857 0.8571 0 0 -1.1429 2.2857 0.8571 0 0 -1.1429 0 0 0 1 0"/><feComponentTransfer><feFuncR type="table" tableValues="0.2196 0.2399 0.2562 0.2712 0.2855 0.2993 0.3126 0.3256 0.3384 0.3509 0.3632 0.3753 0.3873 0.3991 0.4107 0.4223 0.4337 0.4450 0.4563 0.4674 0.4784"/><feFuncG type="table" tableValues="0.4824 0.5208 0.5516 0.5801 0.6072 0.6332 0.6585 0.6832 0.7073 0.7310 0.7543 0.7773 0.7999 0.8222 0.8443 0.8662 0.8879 0.9093 0.9306 0.9516 0.9725"/><feFuncB type="table" tableValues="0.1765 0.1915 0.2036 0.2148 0.2254 0.2356 0.2455 0.2552 0.2647 0.2739 0.2831 0.2921 0.3009 0.3097 0.3184 0.3269 0.3354 0.3438 0.3522 0.3604 0.3686"/></feComponentTransfer></filter><linearGradient id="lg7" x1="0.2966" y1="0.9568" x2="0.7034" y2="0.0432"><stop offset="0" stop-color="#000"/><stop offset="1" stop-color="#f00"/></linearGradient><clipPath id="cp8"><ellipse cx="1123" cy="614" rx="28.5" ry="30"/></clipPath><linearGradient id="tg9" x1="0" y1="0" x2="1" y2="0"><stop offset="0.0000" stop-color="#387b2d"/><stop offset="0.0625" stop-color="#50a93f"/><stop offset="0.1250" stop-color="#5ec249"/><stop offset="0.1875" stop-color="#67d350"/><stop offset="0.2500" stop-color="#6ee055"/><stop offset="0.3125" stop-color="#73ea59"/><stop offset="0.3750" stop-color="#77f25c"/><stop offset="0.4375" stop-color="#7af75e"/><stop offset="0.5000" stop-color="#7af85e"/><stop offset="0.5625" stop-color="#7af85e"/><stop offset="0.6250" stop-color="#7af85e"/><stop offset="0.6875" stop-color="#7af85e"/><stop offset="0.7500" stop-color="#7af85e"/><stop offset="0.8125" stop-color="#77f25c"/><stop offset="0.8750" stop-color="#71e758"/><stop offset="0.9375" stop-color="#68d651"/><stop offset="1.0000" stop-color="#4a9e3b"/></linearGradient><filter id="lf10" color-interpolation-filters="sRGB" x="-0.02" y="-0.02" width="1.04" height="1.04"><feColorMatrix type="matrix" values="2.1465 0.9429 0 0 -1.0732 2.1465 0.9429 0 0 -1.0732 2.1465 0.9429 0 0 -1.0732 0 0 0 1 0"/><feComponentTransfer><feFuncR type="table" tableValues="0.2196 0.2399 0.2562 0.2712 0.2855 0.2993 0.3126 0.3256 0.3384 0.3509 0.3632 0.3753 0.3873 0.3991 0.4107 0.4223 0.4337 0.4450 0.4563 0.4674 0.4784"/><feFuncG type="table" tableValues="0.4824 0.5208 0.5516 0.5801 0.6072 0.6332 0.6585 0.6832 0.7073 0.7310 0.7543 0.7773 0.7999 0.8222 0.8443 0.8662 0.8879 0.9093 0.9306 0.9516 0.9725"/><feFuncB type="table" tableValues="0.1765 0.1915 0.2036 0.2148 0.2254 0.2356 0.2455 0.2552 0.2647 0.2739 0.2831 0.2921 0.3009 0.3097 0.3184 0.3269 0.3354 0.3438 0.3522 0.3604 0.3686"/></feComponentTransfer></filter><linearGradient id="lg11" x1="0.3290" y1="0.9698" x2="0.6710" y2="0.0302"><stop offset="0" stop-color="#000"/><stop offset="1" stop-color="#f00"/></linearGradient><clipPath id="cp12"><ellipse cx="962.3" cy="627" rx="23.3" ry="21.2"/></clipPath><linearGradient id="tg13" x1="0" y1="0" x2="1" y2="0"><stop offset="0.0000" stop-color="#387b2d"/><stop offset="0.0625" stop-color="#50a93f"/><stop offset="0.1250" stop-color="#5ec249"/><stop offset="0.1875" stop-color="#67d350"/><stop offset="0.2500" stop-color="#6ee055"/><stop offset="0.3125" stop-color="#73ea59"/><stop offset="0.3750" stop-color="#77f25c"/><stop offset="0.4375" stop-color="#7af75e"/><stop offset="0.5000" stop-color="#7af85e"/><stop offset="0.5625" stop-color="#7af85e"/><stop offset="0.6250" stop-color="#7af85e"/><stop offset="0.6875" stop-color="#7af85e"/><stop offset="0.7500" stop-color="#7af85e"/><stop offset="0.8125" stop-color="#77f25c"/><stop offset="0.8750" stop-color="#71e758"/><stop offset="0.9375" stop-color="#68d651"/><stop offset="1.0000" stop-color="#4a9e3b"/></linearGradient><filter id="lf14" color-interpolation-filters="sRGB" x="-0.02" y="-0.02" width="1.04" height="1.04"><feColorMatrix type="matrix" values="2.2417 0.8857 0 0 -1.1209 2.2417 0.8857 0 0 -1.1209 2.2417 0.8857 0 0 -1.1209 0 0 0 1 0"/><feComponentTransfer><feFuncR type="table" tableValues="0.2196 0.2399 0.2562 0.2712 0.2855 0.2993 0.3126 0.3256 0.3384 0.3509 0.3632 0.3753 0.3873 0.3991 0.4107 0.4223 0.4337 0.4450 0.4563 0.4674 0.4784"/><feFuncG type="table" tableValues="0.4824 0.5208 0.5516 0.5801 0.6072 0.6332 0.6585 0.6832 0.7073 0.7310 0.7543 0.7773 0.7999 0.8222 0.8443 0.8662 0.8879 0.9093 0.9306 0.9516 0.9725"/><feFuncB type="table" tableValues="0.1765 0.1915 0.2036 0.2148 0.2254 0.2356 0.2455 0.2552 0.2647 0.2739 0.2831 0.2921 0.3009 0.3097 0.3184 0.3269 0.3354 0.3438 0.3522 0.3604 0.3686"/></feComponentTransfer></filter><linearGradient id="lg15" x1="0.2966" y1="0.9568" x2="0.7034" y2="0.0432"><stop offset="0" stop-color="#000"/><stop offset="1" stop-color="#f00"/></linearGradient><clipPath id="cp16"><ellipse cx="1077" cy="595" rx="41" ry="38.5"/></clipPath><linearGradient id="tg17" x1="0" y1="0" x2="1" y2="0"><stop offset="0.0000" stop-color="#387b2d"/><stop offset="0.0625" stop-color="#50a93f"/><stop offset="0.1250" stop-color="#5ec249"/><stop offset="0.1875" stop-color="#67d350"/><stop offset="0.2500" stop-color="#6ee055"/><stop offset="0.3125" stop-color="#73ea59"/><stop offset="0.3750" stop-color="#77f25c"/><stop offset="0.4375" stop-color="#7af75e"/><stop offset="0.5000" stop-color="#7af85e"/><stop offset="0.5625" stop-color="#7af85e"/><stop offset="0.6250" stop-color="#7af85e"/><stop offset="0.6875" stop-color="#7af85e"/><stop offset="0.7500" stop-color="#7af85e"/><stop offset="0.8125" stop-color="#77f25c"/><stop offset="0.8750" stop-color="#71e758"/><stop offset="0.9375" stop-color="#68d651"/><stop offset="1.0000" stop-color="#4a9e3b"/></linearGradient><filter id="lf18" color-interpolation-filters="sRGB" x="-0.02" y="-0.02" width="1.04" height="1.04"><feColorMatrix type="matrix" values="2.1712 0.9286 0 0 -1.0856 2.1712 0.9286 0 0 -1.0856 2.1712 0.9286 0 0 -1.0856 0 0 0 1 0"/><feComponentTransfer><feFuncR type="table" tableValues="0.2196 0.2399 0.2562 0.2712 0.2855 0.2993 0.3126 0.3256 0.3384 0.3509 0.3632 0.3753 0.3873 0.3991 0.4107 0.4223 0.4337 0.4450 0.4563 0.4674 0.4784"/><feFuncG type="table" tableValues="0.4824 0.5208 0.5516 0.5801 0.6072 0.6332 0.6585 0.6832 0.7073 0.7310 0.7543 0.7773 0.7999 0.8222 0.8443 0.8662 0.8879 0.9093 0.9306 0.9516 0.9725"/><feFuncB type="table" tableValues="0.1765 0.1915 0.2036 0.2148 0.2254 0.2356 0.2455 0.2552 0.2647 0.2739 0.2831 0.2921 0.3009 0.3097 0.3184 0.3269 0.3354 0.3438 0.3522 0.3604 0.3686"/></feComponentTransfer></filter><linearGradient id="lg19" x1="0.3127" y1="0.9636" x2="0.6873" y2="0.0364"><stop offset="0" stop-color="#000"/><stop offset="1" stop-color="#f00"/></linearGradient><clipPath id="cp20"><ellipse cx="730" cy="571" rx="70.7" ry="52.8"/></clipPath><linearGradient id="tg21" x1="0" y1="0" x2="1" y2="0"><stop offset="0.0000" stop-color="#387b2d"/><stop offset="0.0625" stop-color="#387b2d"/><stop offset="0.1250" stop-color="#387b2d"/><stop offset="0.1875" stop-color="#387b2d"/><stop offset="0.2500" stop-color="#387b2d"/><stop offset="0.3125" stop-color="#387b2d"/><stop offset="0.3750" stop-color="#387b2d"/><stop offset="0.4375" stop-color="#387b2d"/><stop offset="0.5000" stop-color="#449136"/><stop offset="0.5625" stop-color="#4ea43d"/><stop offset="0.6250" stop-color="#56b544"/><stop offset="0.6875" stop-color="#5fc44a"/><stop offset="0.7500" stop-color="#67d350"/><stop offset="0.8125" stop-color="#6ee155"/><stop offset="0.8750" stop-color="#75ef5a"/><stop offset="0.9375" stop-color="#7af85e"/><stop offset="1.0000" stop-color="#7af85e"/></linearGradient><filter id="lf22" color-interpolation-filters="sRGB" x="-0.02" y="-0.02" width="1.04" height="1.04"><feColorMatrix type="matrix" values="3.5088 0.0000 0 0 -1.7544 3.5088 0.0000 0 0 -1.7544 3.5088 0.0000 0 0 -1.7544 0 0 0 1 0"/><feComponentTransfer><feFuncR type="table" tableValues="0.2196 0.2399 0.2562 0.2712 0.2855 0.2993 0.3126 0.3256 0.3384 0.3509 0.3632 0.3753 0.3873 0.3991 0.4107 0.4223 0.4337 0.4450 0.4563 0.4674 0.4784"/><feFuncG type="table" tableValues="0.4824 0.5208 0.5516 0.5801 0.6072 0.6332 0.6585 0.6832 0.7073 0.7310 0.7543 0.7773 0.7999 0.8222 0.8443 0.8662 0.8879 0.9093 0.9306 0.9516 0.9725"/><feFuncB type="table" tableValues="0.1765 0.1915 0.2036 0.2148 0.2254 0.2356 0.2455 0.2552 0.2647 0.2739 0.2831 0.2921 0.3009 0.3097 0.3184 0.3269 0.3354 0.3438 0.3522 0.3604 0.3686"/></feComponentTransfer></filter><linearGradient id="lg23" x1="0.2277" y1="0.9193" x2="0.7723" y2="0.0807"><stop offset="0" stop-color="#000"/><stop offset="1" stop-color="#f00"/></linearGradient><clipPath id="cp24"><ellipse cx="1704" cy="641" rx="8" ry="10"/></clipPath><linearGradient id="tg25" x1="0" y1="0" x2="1" y2="0"><stop offset="0.0000" stop-color="#387b2d"/><stop offset="0.0625" stop-color="#387b2d"/><stop offset="0.1250" stop-color="#387b2d"/><stop offset="0.1875" stop-color="#387b2d"/><stop offset="0.2500" stop-color="#387b2d"/><stop offset="0.3125" stop-color="#387b2d"/><stop offset="0.3750" stop-color="#3c8230"/><stop offset="0.4375" stop-color="#479838"/><stop offset="0.5000" stop-color="#51aa40"/><stop offset="0.5625" stop-color="#5abb46"/><stop offset="0.6250" stop-color="#62ca4c"/><stop offset="0.6875" stop-color="#69d852"/><stop offset="0.7500" stop-color="#70e557"/><stop offset="0.8125" stop-color="#76f15b"/><stop offset="0.8750" stop-color="#7af85e"/><stop offset="0.9375" stop-color="#7af85e"/><stop offset="1.0000" stop-color="#7af85e"/></linearGradient><filter id="lf26" color-interpolation-filters="sRGB" x="-0.02" y="-0.02" width="1.04" height="1.04"><feColorMatrix type="matrix" values="3.5088 0.0000 0 0 -1.7544 3.5088 0.0000 0 0 -1.7544 3.5088 0.0000 0 0 -1.7544 0 0 0 1 0"/><feComponentTransfer><feFuncR type="table" tableValues="0.2196 0.2399 0.2562 0.2712 0.2855 0.2993 0.3126 0.3256 0.3384 0.3509 0.3632 0.3753 0.3873 0.3991 0.4107 0.4223 0.4337 0.4450 0.4563 0.4674 0.4784"/><feFuncG type="table" tableValues="0.4824 0.5208 0.5516 0.5801 0.6072 0.6332 0.6585 0.6832 0.7073 0.7310 0.7543 0.7773 0.7999 0.8222 0.8443 0.8662 0.8879 0.9093 0.9306 0.9516 0.9725"/><feFuncB type="table" tableValues="0.1765 0.1915 0.2036 0.2148 0.2254 0.2356 0.2455 0.2552 0.2647 0.2739 0.2831 0.2921 0.3009 0.3097 0.3184 0.3269 0.3354 0.3438 0.3522 0.3604 0.3686"/></feComponentTransfer></filter><linearGradient id="lg27" x1="0.2277" y1="0.9193" x2="0.7723" y2="0.0807"><stop offset="0" stop-color="#000"/><stop offset="1" stop-color="#f00"/></linearGradient><clipPath id="cp28"><ellipse cx="1648.5" cy="631.5" rx="19" ry="18.8"/></clipPath><linearGradient id="tg29" x1="0" y1="0" x2="1" y2="0"><stop offset="0.0000" stop-color="#387b2d"/><stop offset="0.0625" stop-color="#387b2d"/><stop offset="0.1250" stop-color="#387b2d"/><stop offset="0.1875" stop-color="#387b2d"/><stop offset="0.2500" stop-color="#387b2d"/><stop offset="0.3125" stop-color="#387b2d"/><stop offset="0.3750" stop-color="#3c8230"/><stop offset="0.4375" stop-color="#479838"/><stop offset="0.5000" stop-color="#51aa40"/><stop offset="0.5625" stop-color="#5abb46"/><stop offset="0.6250" stop-color="#62ca4c"/><stop offset="0.6875" stop-color="#69d852"/><stop offset="0.7500" stop-color="#70e557"/><stop offset="0.8125" stop-color="#76f15b"/><stop offset="0.8750" stop-color="#7af85e"/><stop offset="0.9375" stop-color="#7af85e"/><stop offset="1.0000" stop-color="#7af85e"/></linearGradient><filter id="lf30" color-interpolation-filters="sRGB" x="-0.02" y="-0.02" width="1.04" height="1.04"><feColorMatrix type="matrix" values="3.4834 0.2105 0 0 -1.7417 3.4834 0.2105 0 0 -1.7417 3.4834 0.2105 0 0 -1.7417 0 0 0 1 0"/><feComponentTransfer><feFuncR type="table" tableValues="0.2196 0.2399 0.2562 0.2712 0.2855 0.2993 0.3126 0.3256 0.3384 0.3509 0.3632 0.3753 0.3873 0.3991 0.4107 0.4223 0.4337 0.4450 0.4563 0.4674 0.4784"/><feFuncG type="table" tableValues="0.4824 0.5208 0.5516 0.5801 0.6072 0.6332 0.6585 0.6832 0.7073 0.7310 0.7543 0.7773 0.7999 0.8222 0.8443 0.8662 0.8879 0.9093 0.9306 0.9516 0.9725"/><feFuncB type="table" tableValues="0.1765 0.1915 0.2036 0.2148 0.2254 0.2356 0.2455 0.2552 0.2647 0.2739 0.2831 0.2921 0.3009 0.3097 0.3184 0.3269 0.3354 0.3438 0.3522 0.3604 0.3686"/></feComponentTransfer></filter><linearGradient id="lg31" x1="0.2277" y1="0.9193" x2="0.7723" y2="0.0807"><stop offset="0" stop-color="#000"/><stop offset="1" stop-color="#f00"/></linearGradient><clipPath id="cp32"><ellipse cx="1551" cy="632" rx="18.3" ry="17"/></clipPath><linearGradient id="tg33" x1="0" y1="0" x2="1" y2="0"><stop offset="0.0000" stop-color="#387b2d"/><stop offset="0.0625" stop-color="#387b2d"/><stop offset="0.1250" stop-color="#387b2d"/><stop offset="0.1875" stop-color="#387b2d"/><stop offset="0.2500" stop-color="#387b2d"/><stop offset="0.3125" stop-color="#387b2d"/><stop offset="0.3750" stop-color="#3c8230"/><stop offset="0.4375" stop-color="#479838"/><stop offset="0.5000" stop-color="#51aa40"/><stop offset="0.5625" stop-color="#5abb46"/><stop offset="0.6250" stop-color="#62ca4c"/><stop offset="0.6875" stop-color="#69d852"/><stop offset="0.7500" stop-color="#70e557"/><stop offset="0.8125" stop-color="#76f15b"/><stop offset="0.8750" stop-color="#7af85e"/><stop offset="0.9375" stop-color="#7af85e"/><stop offset="1.0000" stop-color="#7af85e"/></linearGradient><filter id="lf34" color-interpolation-filters="sRGB" x="-0.02" y="-0.02" width="1.04" height="1.04"><feColorMatrix type="matrix" values="3.1798 0.5000 0 0 -1.5899 3.1798 0.5000 0 0 -1.5899 3.1798 0.5000 0 0 -1.5899 0 0 0 1 0"/><feComponentTransfer><feFuncR type="table" tableValues="0.2196 0.2399 0.2562 0.2712 0.2855 0.2993 0.3126 0.3256 0.3384 0.3509 0.3632 0.3753 0.3873 0.3991 0.4107 0.4223 0.4337 0.4450 0.4563 0.4674 0.4784"/><feFuncG type="table" tableValues="0.4824 0.5208 0.5516 0.5801 0.6072 0.6332 0.6585 0.6832 0.7073 0.7310 0.7543 0.7773 0.7999 0.8222 0.8443 0.8662 0.8879 0.9093 0.9306 0.9516 0.9725"/><feFuncB type="table" tableValues="0.1765 0.1915 0.2036 0.2148 0.2254 0.2356 0.2455 0.2552 0.2647 0.2739 0.2831 0.2921 0.3009 0.3097 0.3184 0.3269 0.3354 0.3438 0.3522 0.3604 0.3686"/></feComponentTransfer></filter><linearGradient id="lg35" x1="0.2350" y1="0.9240" x2="0.7650" y2="0.0760"><stop offset="0" stop-color="#000"/><stop offset="1" stop-color="#f00"/></linearGradient><clipPath id="cp36"><ellipse cx="1486" cy="629.5" rx="20.7" ry="20"/></clipPath><linearGradient id="tg37" x1="0" y1="0" x2="1" y2="0"><stop offset="0.0000" stop-color="#387b2d"/><stop offset="0.0625" stop-color="#387b2d"/><stop offset="0.1250" stop-color="#387b2d"/><stop offset="0.1875" stop-color="#387b2d"/><stop offset="0.2500" stop-color="#387b2d"/><stop offset="0.3125" stop-color="#387b2d"/><stop offset="0.3750" stop-color="#387b2d"/><stop offset="0.4375" stop-color="#387b2d"/><stop offset="0.5000" stop-color="#449136"/><stop offset="0.5625" stop-color="#4ea43d"/><stop offset="0.6250" stop-color="#56b544"/><stop offset="0.6875" stop-color="#5fc44a"/><stop offset="0.7500" stop-color="#67d350"/><stop offset="0.8125" stop-color="#6ee155"/><stop offset="0.8750" stop-color="#75ef5a"/><stop offset="0.9375" stop-color="#7af85e"/><stop offset="1.0000" stop-color="#7af85e"/></linearGradient><filter id="lf38" color-interpolation-filters="sRGB" x="-0.02" y="-0.02" width="1.04" height="1.04"><feColorMatrix type="matrix" values="3.5060 -0.0702 0 0 -1.7530 3.5060 -0.0702 0 0 -1.7530 3.5060 -0.0702 0 0 -1.7530 0 0 0 1 0"/><feComponentTransfer><feFuncR type="table" tableValues="0.2196 0.2399 0.2562 0.2712 0.2855 0.2993 0.3126 0.3256 0.3384 0.3509 0.3632 0.3753 0.3873 0.3991 0.4107 0.4223 0.4337 0.4450 0.4563 0.4674 0.4784"/><feFuncG type="table" tableValues="0.4824 0.5208 0.5516 0.5801 0.6072 0.6332 0.6585 0.6832 0.7073 0.7310 0.7543 0.7773 0.7999 0.8222 0.8443 0.8662 0.8879 0.9093 0.9306 0.9516 0.9725"/><feFuncB type="table" tableValues="0.1765 0.1915 0.2036 0.2148 0.2254 0.2356 0.2455 0.2552 0.2647 0.2739 0.2831 0.2921 0.3009 0.3097 0.3184 0.3269 0.3354 0.3438 0.3522 0.3604 0.3686"/></feComponentTransfer></filter><linearGradient id="lg39" x1="0.2277" y1="0.9193" x2="0.7723" y2="0.0807"><stop offset="0" stop-color="#000"/><stop offset="1" stop-color="#f00"/></linearGradient><clipPath id="cp40"><ellipse cx="1684.3" cy="612" rx="35" ry="32"/></clipPath><linearGradient id="tg41" x1="0" y1="0" x2="1" y2="0"><stop offset="0.0000" stop-color="#387b2d"/><stop offset="0.0625" stop-color="#387b2d"/><stop offset="0.1250" stop-color="#387b2d"/><stop offset="0.1875" stop-color="#387b2d"/><stop offset="0.2500" stop-color="#387b2d"/><stop offset="0.3125" stop-color="#387b2d"/><stop offset="0.3750" stop-color="#387b2d"/><stop offset="0.4375" stop-color="#387b2d"/><stop offset="0.5000" stop-color="#449136"/><stop offset="0.5625" stop-color="#4ea43d"/><stop offset="0.6250" stop-color="#56b544"/><stop offset="0.6875" stop-color="#5fc44a"/><stop offset="0.7500" stop-color="#67d350"/><stop offset="0.8125" stop-color="#6ee155"/><stop offset="0.8750" stop-color="#75ef5a"/><stop offset="0.9375" stop-color="#7af85e"/><stop offset="1.0000" stop-color="#7af85e"/></linearGradient><filter id="lf42" color-interpolation-filters="sRGB" x="-0.02" y="-0.02" width="1.04" height="1.04"><feColorMatrix type="matrix" values="3.4834 0.2105 0 0 -1.7417 3.4834 0.2105 0 0 -1.7417 3.4834 0.2105 0 0 -1.7417 0 0 0 1 0"/><feComponentTransfer><feFuncR type="table" tableValues="0.2196 0.2399 0.2562 0.2712 0.2855 0.2993 0.3126 0.3256 0.3384 0.3509 0.3632 0.3753 0.3873 0.3991 0.4107 0.4223 0.4337 0.4450 0.4563 0.4674 0.4784"/><feFuncG type="table" tableValues="0.4824 0.5208 0.5516 0.5801 0.6072 0.6332 0.6585 0.6832 0.7073 0.7310 0.7543 0.7773 0.7999 0.8222 0.8443 0.8662 0.8879 0.9093 0.9306 0.9516 0.9725"/><feFuncB type="table" tableValues="0.1765 0.1915 0.2036 0.2148 0.2254 0.2356 0.2455 0.2552 0.2647 0.2739 0.2831 0.2921 0.3009 0.3097 0.3184 0.3269 0.3354 0.3438 0.3522 0.3604 0.3686"/></feComponentTransfer></filter><linearGradient id="lg43" x1="0.2277" y1="0.9193" x2="0.7723" y2="0.0807"><stop offset="0" stop-color="#000"/><stop offset="1" stop-color="#f00"/></linearGradient><clipPath id="cp44"><ellipse cx="1955" cy="588" rx="39" ry="41"/></clipPath><linearGradient id="tg45" x1="0" y1="0" x2="1" y2="0"><stop offset="0.0000" stop-color="#387b2d"/><stop offset="0.0625" stop-color="#387b2d"/><stop offset="0.1250" stop-color="#387b2d"/><stop offset="0.1875" stop-color="#387b2d"/><stop offset="0.2500" stop-color="#387b2d"/><stop offset="0.3125" stop-color="#387b2d"/><stop offset="0.3750" stop-color="#387b2d"/><stop offset="0.4375" stop-color="#387b2d"/><stop offset="0.5000" stop-color="#449136"/><stop offset="0.5625" stop-color="#4ea43d"/><stop offset="0.6250" stop-color="#56b544"/><stop offset="0.6875" stop-color="#5fc44a"/><stop offset="0.7500" stop-color="#67d350"/><stop offset="0.8125" stop-color="#6ee155"/><stop offset="0.8750" stop-color="#75ef5a"/><stop offset="0.9375" stop-color="#7af85e"/><stop offset="1.0000" stop-color="#7af85e"/></linearGradient><filter id="lf46" color-interpolation-filters="sRGB" x="-0.02" y="-0.02" width="1.04" height="1.04"><feColorMatrix type="matrix" values="3.5081 -0.0351 0 0 -1.7540 3.5081 -0.0351 0 0 -1.7540 3.5081 -0.0351 0 0 -1.7540 0 0 0 1 0"/><feComponentTransfer><feFuncR type="table" tableValues="0.2196 0.2399 0.2562 0.2712 0.2855 0.2993 0.3126 0.3256 0.3384 0.3509 0.3632 0.3753 0.3873 0.3991 0.4107 0.4223 0.4337 0.4450 0.4563 0.4674 0.4784"/><feFuncG type="table" tableValues="0.4824 0.5208 0.5516 0.5801 0.6072 0.6332 0.6585 0.6832 0.7073 0.7310 0.7543 0.7773 0.7999 0.8222 0.8443 0.8662 0.8879 0.9093 0.9306 0.9516 0.9725"/><feFuncB type="table" tableValues="0.1765 0.1915 0.2036 0.2148 0.2254 0.2356 0.2455 0.2552 0.2647 0.2739 0.2831 0.2921 0.3009 0.3097 0.3184 0.3269 0.3354 0.3438 0.3522 0.3604 0.3686"/></feComponentTransfer></filter><linearGradient id="lg47" x1="0.2204" y1="0.9145" x2="0.7796" y2="0.0855"><stop offset="0" stop-color="#000"/><stop offset="1" stop-color="#f00"/></linearGradient><clipPath id="cp48"><ellipse cx="1881" cy="548.5" rx="88" ry="66.5"/></clipPath><linearGradient id="tg49" x1="0" y1="0" x2="1" y2="0"><stop offset="0.0000" stop-color="#387b2d"/><stop offset="0.0625" stop-color="#387b2d"/><stop offset="0.1250" stop-color="#387b2d"/><stop offset="0.1875" stop-color="#387b2d"/><stop offset="0.2500" stop-color="#387b2d"/><stop offset="0.3125" stop-color="#387b2d"/><stop offset="0.3750" stop-color="#387b2d"/><stop offset="0.4375" stop-color="#387b2d"/><stop offset="0.5000" stop-color="#449136"/><stop offset="0.5625" stop-color="#4ea43d"/><stop offset="0.6250" stop-color="#56b544"/><stop offset="0.6875" stop-color="#5fc44a"/><stop offset="0.7500" stop-color="#67d350"/><stop offset="0.8125" stop-color="#6ee155"/><stop offset="0.8750" stop-color="#75ef5a"/><stop offset="0.9375" stop-color="#7af85e"/><stop offset="1.0000" stop-color="#7af85e"/></linearGradient><filter id="lf50" color-interpolation-filters="sRGB" x="-0.02" y="-0.02" width="1.04" height="1.04"><feColorMatrix type="matrix" values="3.5044 -0.0877 0 0 -1.7522 3.5044 -0.0877 0 0 -1.7522 3.5044 -0.0877 0 0 -1.7522 0 0 0 1 0"/><feComponentTransfer><feFuncR type="table" tableValues="0.2196 0.2399 0.2562 0.2712 0.2855 0.2993 0.3126 0.3256 0.3384 0.3509 0.3632 0.3753 0.3873 0.3991 0.4107 0.4223 0.4337 0.4450 0.4563 0.4674 0.4784"/><feFuncG type="table" tableValues="0.4824 0.5208 0.5516 0.5801 0.6072 0.6332 0.6585 0.6832 0.7073 0.7310 0.7543 0.7773 0.7999 0.8222 0.8443 0.8662 0.8879 0.9093 0.9306 0.9516 0.9725"/><feFuncB type="table" tableValues="0.1765 0.1915 0.2036 0.2148 0.2254 0.2356 0.2455 0.2552 0.2647 0.2739 0.2831 0.2921 0.3009 0.3097 0.3184 0.3269 0.3354 0.3438 0.3522 0.3604 0.3686"/></feComponentTransfer></filter><linearGradient id="lg51" x1="0.2277" y1="0.9193" x2="0.7723" y2="0.0807"><stop offset="0" stop-color="#000"/><stop offset="1" stop-color="#f00"/></linearGradient><clipPath id="cp52"><ellipse cx="1607.5" cy="552.5" rx="75.4" ry="75.4"/></clipPath><linearGradient id="tg53" x1="0" y1="0" x2="1" y2="0"><stop offset="0.0000" stop-color="#387b2d"/><stop offset="0.0625" stop-color="#387b2d"/><stop offset="0.1250" stop-color="#387b2d"/><stop offset="0.1875" stop-color="#439035"/><stop offset="0.2500" stop-color="#4ea43d"/><stop offset="0.3125" stop-color="#56b544"/><stop offset="0.3750" stop-color="#5ec349"/><stop offset="0.4375" stop-color="#64cf4e"/><stop offset="0.5000" stop-color="#6ad952"/><stop offset="0.5625" stop-color="#6fe356"/><stop offset="0.6250" stop-color="#73ea59"/><stop offset="0.6875" stop-color="#76f15b"/><stop offset="0.7500" stop-color="#79f55d"/><stop offset="0.8125" stop-color="#7af85e"/><stop offset="0.8750" stop-color="#7af85e"/><stop offset="0.9375" stop-color="#78f45c"/><stop offset="1.0000" stop-color="#69d851"/></linearGradient><filter id="lf54" color-interpolation-filters="sRGB" x="-0.02" y="-0.02" width="1.04" height="1.04"><feColorMatrix type="matrix" values="3.1798 0.5000 0 0 -1.5899 3.1798 0.5000 0 0 -1.5899 3.1798 0.5000 0 0 -1.5899 0 0 0 1 0"/><feComponentTransfer><feFuncR type="table" tableValues="0.2196 0.2399 0.2562 0.2712 0.2855 0.2993 0.3126 0.3256 0.3384 0.3509 0.3632 0.3753 0.3873 0.3991 0.4107 0.4223 0.4337 0.4450 0.4563 0.4674 0.4784"/><feFuncG type="table" tableValues="0.4824 0.5208 0.5516 0.5801 0.6072 0.6332 0.6585 0.6832 0.7073 0.7310 0.7543 0.7773 0.7999 0.8222 0.8443 0.8662 0.8879 0.9093 0.9306 0.9516 0.9725"/><feFuncB type="table" tableValues="0.1765 0.1915 0.2036 0.2148 0.2254 0.2356 0.2455 0.2552 0.2647 0.2739 0.2831 0.2921 0.3009 0.3097 0.3184 0.3269 0.3354 0.3438 0.3522 0.3604 0.3686"/></feComponentTransfer></filter><linearGradient id="lg55" x1="0.2500" y1="0.9330" x2="0.7500" y2="0.0670"><stop offset="0" stop-color="#000"/><stop offset="1" stop-color="#f00"/></linearGradient><clipPath id="cp56"><ellipse cx="1272" cy="621.7" rx="23" ry="25"/></clipPath><linearGradient id="tg57" x1="0" y1="0" x2="1" y2="0"><stop offset="0.0000" stop-color="#387b2d"/><stop offset="0.0625" stop-color="#387b2d"/><stop offset="0.1250" stop-color="#387b2d"/><stop offset="0.1875" stop-color="#439035"/><stop offset="0.2500" stop-color="#4ea43d"/><stop offset="0.3125" stop-color="#56b544"/><stop offset="0.3750" stop-color="#5ec349"/><stop offset="0.4375" stop-color="#64cf4e"/><stop offset="0.5000" stop-color="#6ad952"/><stop offset="0.5625" stop-color="#6fe356"/><stop offset="0.6250" stop-color="#73ea59"/><stop offset="0.6875" stop-color="#76f15b"/><stop offset="0.7500" stop-color="#79f55d"/><stop offset="0.8125" stop-color="#7af85e"/><stop offset="0.8750" stop-color="#7af85e"/><stop offset="0.9375" stop-color="#78f45c"/><stop offset="1.0000" stop-color="#69d851"/></linearGradient><filter id="lf58" color-interpolation-filters="sRGB" x="-0.02" y="-0.02" width="1.04" height="1.04"><feColorMatrix type="matrix" values="2.4201 0.5600 0 0 -1.2100 2.4201 0.5600 0 0 -1.2100 2.4201 0.5600 0 0 -1.2100 0 0 0 1 0"/><feComponentTransfer><feFuncR type="table" tableValues="0.2196 0.2399 0.2562 0.2712 0.2855 0.2993 0.3126 0.3256 0.3384 0.3509 0.3632 0.3753 0.3873 0.3991 0.4107 0.4223 0.4337 0.4450 0.4563 0.4674 0.4784"/><feFuncG type="table" tableValues="0.4824 0.5208 0.5516 0.5801 0.6072 0.6332 0.6585 0.6832 0.7073 0.7310 0.7543 0.7773 0.7999 0.8222 0.8443 0.8662 0.8879 0.9093 0.9306 0.9516 0.9725"/><feFuncB type="table" tableValues="0.1765 0.1915 0.2036 0.2148 0.2254 0.2356 0.2455 0.2552 0.2647 0.2739 0.2831 0.2921 0.3009 0.3097 0.3184 0.3269 0.3354 0.3438 0.3522 0.3604 0.3686"/></feComponentTransfer></filter><linearGradient id="lg59" x1="0.2204" y1="0.9145" x2="0.7796" y2="0.0855"><stop offset="0" stop-color="#000"/><stop offset="1" stop-color="#f00"/></linearGradient><clipPath id="cp60"><ellipse cx="1229.3" cy="440.5" rx="129.3" ry="131"/></clipPath></defs><rect x="577" y="272" width="1462" height="392.5" fill="#6b99a2"/>
<rect x="577" y="664.5" width="1462" height="387.5" fill="url(#ground)"/>
<rect x="577" y="664.5" width="1462" height="387.5" fill="url(#groundx)" mask="url(#gmask)"/>
<g fill="#3e4429"><ellipse cx="988.5" cy="872" rx="105.5" ry="31"/><path d="M1030 899 L1090 884 L1189 922 L1189 971 Z"/><ellipse cx="656" cy="770" rx="28" ry="7"/><path d="M640 765 L709 759 L709 789 L676 773 Z"/><ellipse cx="931" cy="708.5" rx="24" ry="2.3"/><path d="M940 709 L956 709 L956 712 L945 711 Z"/><ellipse cx="1001" cy="744.5" rx="40" ry="5"/><path d="M1020 742 L1066 748 L1066 757 L1030 749 Z"/><ellipse cx="1048" cy="724" rx="17" ry="2.6"/><path d="M1092 726 L1111 727 L1111 730 L1092 728.5 Z"/><path d="M1036 701 L1066 701 L1066 703 L1036 703 Z"/><path d="M1181 714 L1189 714 L1189 716 L1181 716 Z"/><path d="M1468 700 L1506 700 L1506 702 L1468 702 Z"/><ellipse cx="1424" cy="705.5" rx="30" ry="1.6"/><path d="M1533 701.5 L1576 701.5 L1576 703.5 L1533 703.5 Z"/><path d="M1657 698.5 L1671 698.5 L1671 700.5 L1657 700.5 Z"/><path d="M1637 732 L1667 732 L1667 734 L1637 734 Z"/><ellipse cx="1551" cy="726.5" rx="25" ry="2.6"/><ellipse cx="1440" cy="742" rx="31" ry="3.7"/><path d="M1440 738 L1576 750.5 L1576 754 L1440 746.5 Z"/><ellipse cx="1380" cy="794" rx="70" ry="12.5"/><path d="M1420 784 L1450 796 L1580 820 L1580 830 L1440 804 Z"/><ellipse cx="1570" cy="787" rx="42" ry="10"/><path d="M1600 779 L1629 783 L1848 812 L1852 822 L1629 802 L1590 796 Z"/><ellipse cx="1700" cy="754" rx="40" ry="3.5"/><path d="M1700 750 L1848 764 L1848 766.5 L1700 758 Z"/></g>
<path d="M1092 641.5 V704.5 A4.5 1.0 0 0 0 1101 704.5 V641.5 Z" fill="url(#tg1)"/><g clip-path="url(#cp4)"><g filter="url(#lf2)"><ellipse cx="1101" cy="641.5" rx="11.40" ry="9.50" fill="url(#lg3)"/><ellipse cx="1101" cy="641.5" rx="11.40" ry="9.50" fill="url(#zg)" style="mix-blend-mode:screen"/></g></g>
<path d="M1111 614 V729.0 A10.9 2.4 0 0 0 1132.7 729.0 V614 Z" fill="url(#tg5)"/><path d="M1111 614 H1132.7 V653 Q1121.8 645.5 1111 656 Z" fill="#387b2d"/><g clip-path="url(#cp8)"><g filter="url(#lf6)"><ellipse cx="1123" cy="614" rx="30.50" ry="32.11" fill="url(#lg7)"/><ellipse cx="1123" cy="614" rx="30.50" ry="32.11" fill="url(#zg)" style="mix-blend-mode:screen"/></g></g>
<path d="M955 627 V710.3 A7.8 1.7 0 0 0 970.5 710.3 V627 Z" fill="url(#tg9)"/><path d="M955 627 H970.5 V651 Q962.8 646.5 955 652 Z" fill="#387b2d"/><g clip-path="url(#cp12)"><g filter="url(#lf10)"><ellipse cx="962.3" cy="627" rx="25.50" ry="23.20" fill="url(#lg11)"/><ellipse cx="962.3" cy="627" rx="25.50" ry="23.20" fill="url(#zg)" style="mix-blend-mode:screen"/></g></g>
<path d="M1065.5 595 V754.0 A13.5 3.0 0 0 0 1092.4 754.0 V595 Z" fill="url(#tg13)"/><path d="M1065.5 595 H1092.4 V641 Q1079.0 633.5 1065.5 644 Z" fill="#387b2d"/><g clip-path="url(#cp16)"><g filter="url(#lf14)"><ellipse cx="1077" cy="595" rx="43.13" ry="40.50" fill="url(#lg15)"/><ellipse cx="1077" cy="595" rx="43.13" ry="40.50" fill="url(#zg)" style="mix-blend-mode:screen"/></g></g>
<path d="M709 571 V786.5 A23.6 5.2 0 0 0 756.3 786.5 V571 Z" fill="url(#tg17)"/><path d="M709 571 H756.3 V636 Q732.6 623.0 709 638 Z" fill="#387b2d"/><g clip-path="url(#cp20)"><g filter="url(#lf18)"><ellipse cx="730" cy="571" rx="73.38" ry="54.80" fill="url(#lg19)"/><ellipse cx="730" cy="571" rx="73.38" ry="54.80" fill="url(#zg)" style="mix-blend-mode:screen"/></g></g>
<path d="M1695 641 V699.5 A1.8 0.5 0 0 0 1698.6 699.5 V641 Z" fill="url(#tg21)"/><g clip-path="url(#cp24)"><g filter="url(#lf22)"><ellipse cx="1704" cy="641" rx="10.00" ry="12.50" fill="url(#lg23)"/><ellipse cx="1704" cy="641" rx="10.00" ry="12.50" fill="url(#zg)" style="mix-blend-mode:screen"/></g></g>
<path d="M1643.4 631.5 V702.8 A6.9 1.5 0 0 0 1657.2 702.8 V631.5 Z" fill="url(#tg25)"/><path d="M1643.4 631.5 H1657.2 V654 Q1650.3 658.0 1643.4 662 Z" fill="#387b2d"/><g clip-path="url(#cp28)"><g filter="url(#lf26)"><ellipse cx="1648.5" cy="631.5" rx="21.02" ry="20.80" fill="url(#lg27)"/><ellipse cx="1648.5" cy="631.5" rx="21.02" ry="20.80" fill="url(#zg)" style="mix-blend-mode:screen"/></g></g>
<path d="M1545.3 632 V702.4 A5.9 1.3 0 0 0 1557 702.4 V632 Z" fill="url(#tg29)"/><path d="M1545.3 632 H1557 V652 Q1551.2 656.0 1545.3 660 Z" fill="#387b2d"/><g clip-path="url(#cp32)"><g filter="url(#lf30)"><ellipse cx="1551" cy="632" rx="20.45" ry="19.00" fill="url(#lg31)"/><ellipse cx="1551" cy="632" rx="20.45" ry="19.00" fill="url(#zg)" style="mix-blend-mode:screen"/></g></g>
<path d="M1479.4 629.5 V707.7 A6.9 1.5 0 0 0 1493.2 707.7 V629.5 Z" fill="url(#tg33)"/><path d="M1479.4 629.5 H1493.2 V651 Q1486.3 654.5 1479.4 660 Z" fill="#387b2d"/><g clip-path="url(#cp36)"><g filter="url(#lf34)"><ellipse cx="1486" cy="629.5" rx="22.77" ry="22.00" fill="url(#lg35)"/><ellipse cx="1486" cy="629.5" rx="22.77" ry="22.00" fill="url(#zg)" style="mix-blend-mode:screen"/></g></g>
<path d="M1671 612 V733.4 A12.0 2.6 0 0 0 1695 733.4 V612 Z" fill="url(#tg37)"/><path d="M1671 612 H1695 V648 Q1683.0 656.0 1671 664 Z" fill="#387b2d"/><g clip-path="url(#cp40)"><g filter="url(#lf38)"><ellipse cx="1684.3" cy="612" rx="37.19" ry="34.00" fill="url(#lg39)"/><ellipse cx="1684.3" cy="612" rx="37.19" ry="34.00" fill="url(#zg)" style="mix-blend-mode:screen"/></g></g>
<path d="M1905.6 588 V768.9 A21.5 4.7 0 0 0 1948.5 768.9 V588 Z" fill="url(#tg41)"/><path d="M1905.6 588 H1948.5 V630 Q1927.0 646.0 1905.6 662 Z" fill="#387b2d"/><g clip-path="url(#cp44)"><g filter="url(#lf42)"><ellipse cx="1955" cy="588" rx="41.00" ry="43.10" fill="url(#lg43)"/><ellipse cx="1955" cy="588" rx="41.00" ry="43.10" fill="url(#zg)" style="mix-blend-mode:screen"/></g></g>
<path d="M1847.3 548.5 V818.5 A28.7 6.3 0 0 0 1904.7 818.5 V548.5 Z" fill="url(#tg45)"/><path d="M1847.3 548.5 H1904.7 V624 Q1876.0 642.0 1847.3 660 Z" fill="#387b2d"/><g clip-path="url(#cp48)"><g filter="url(#lf46)"><ellipse cx="1881" cy="548.5" rx="90.65" ry="68.50" fill="url(#lg47)"/><ellipse cx="1881" cy="548.5" rx="90.65" ry="68.50" fill="url(#zg)" style="mix-blend-mode:screen"/></g></g>
<path d="M1576 552.5 V823.6 A26.5 5.8 0 0 0 1629 823.6 V552.5 Z" fill="url(#tg49)"/><path d="M1576 552.5 H1629 V621 Q1602.5 637.5 1576 664 Z" fill="#387b2d"/><g clip-path="url(#cp52)"><g filter="url(#lf50)"><ellipse cx="1607.5" cy="552.5" rx="77.40" ry="77.40" fill="url(#lg51)"/><ellipse cx="1607.5" cy="552.5" rx="77.40" ry="77.40" fill="url(#zg)" style="mix-blend-mode:screen"/></g></g>
<path d="M1268 621.7 V717.0 A5.8 1.0 0 0 0 1279.5 717.0 V621.7 Z" fill="url(#tg53)"/><g clip-path="url(#cp56)"><g filter="url(#lf54)"><ellipse cx="1272" cy="621.7" rx="25.00" ry="27.17" fill="url(#lg55)"/><ellipse cx="1272" cy="621.7" rx="25.00" ry="27.17" fill="url(#zg)" style="mix-blend-mode:screen"/></g></g>
<path d="M1189 440.5 V966.4 A43.1 16.0 0 0 0 1275.2 966.4 V440.5 Z" fill="url(#tg57)"/><path d="M1189 440.5 H1275.2 V592 Q1232.1 563.5 1189 625 Z" fill="#387b2d"/><g clip-path="url(#cp60)"><g filter="url(#lf58)"><ellipse cx="1229.3" cy="440.5" rx="131.30" ry="133.03" fill="url(#lg59)"/><ellipse cx="1229.3" cy="440.5" rx="131.30" ry="133.03" fill="url(#zg)" style="mix-blend-mode:screen"/></g></g></svg>
<div class="panel" style="left:2043px;top:192px;width:543px;height:1284px;border-radius:6px 6px 0 0"></div>
<div class="tabbar" style="left:2043px;top:192px;width:543px;border-radius:6px 6px 0 0"></div>
<div class="tab" style="left:2043px;top:192px;width:186px"></div>
<svg class="abs" style="left:2060px;top:201px" width="21" height="21" viewBox="0 0 21 21"><circle cx="10.5" cy="10.5" r="10.5" fill="#555"/><rect x="9" y="9" width="3" height="7.5" fill="#cbcbcb"/><circle cx="10.5" cy="5.6" r="1.8" fill="#cbcbcb"/></svg>
<div class="t abs" style="left:2091px;top:196px;height:32px;line-height:32px">Inspector</div>
<svg class="abs" style="left:2249px;top:200px" width="19" height="25" viewBox="0 0 19 25"><circle cx="9.5" cy="9" r="9" fill="#5a5a5a"/><path d="M4.5 14 H14.5 V18 H4.5Z" fill="#5a5a5a"/><path d="M5 20.5 H14 a4.5 4 0 0 1 -9 0Z" fill="#5a5a5a"/></svg>
<div class="t abs" style="left:2279px;top:196px;height:32px;line-height:32px">Lighting</div>
<svg class="abs" style="left:2515px;top:199px" width="18" height="22" viewBox="0 0 18 22"><g fill="none" stroke="#5a5a5a" stroke-width="2.2"><rect x="3.3" y="12.6" width="13.5" height="7.2" rx="0.8"/><path d="M14.6 12 V6.4 A4.2 4.4 0 0 0 6.3 5.2"/></g></svg>
<svg class="abs" style="left:2554px;top:199px" width="8" height="24" viewBox="0 0 8 24"><circle cx="4" cy="3.5" r="2.5" fill="#555"/><circle cx="4" cy="10.9" r="2.5" fill="#555"/><circle cx="4" cy="18.4" r="2.5" fill="#555"/></svg>
<div class="tbb" style="left:2229px;top:228px;width:357px"></div>
<div class="panel" style="left:112px;top:1056px;width:1927px;height:420px;border-radius:6px 6px 0 0"></div>
<div class="tabbar" style="left:112px;top:1056px;width:1927px;border-radius:0 6px 0 0"></div>
<div class="tab" style="left:112px;top:1056px;width:160px;border-radius:0 6px 0 0"></div>
<svg class="abs" style="left:126px;top:1066px" width="25" height="20" viewBox="0 0 25 20"><path d="M1 2.5 a2 2 0 0 1 2 -2 H9.5 L12.5 4.5 H22 a2 2 0 0 1 2 2 V17.5 a2 2 0 0 1 -2 2 H3 a2 2 0 0 1 -2 -2 Z" fill="#555"/></svg>
<div class="t abs" style="left:158px;top:1061px;height:32px;line-height:32px">Project</div>
<svg class="abs" style="left:291px;top:1064px" width="21" height="22" viewBox="0 0 21 22"><rect x="0.5" y="0.5" width="20" height="21" rx="2.5" fill="#555"/><path d="M4 6H17M4 10H17M4 14H17M4 18H12" stroke="#a6a6a6" stroke-width="1.8"/></svg>
<div class="t abs" style="left:322px;top:1061px;height:32px;line-height:32px">Console</div>
<svg class="abs" style="left:1970px;top:1063px" width="18" height="22" viewBox="0 0 18 22"><g fill="none" stroke="#5a5a5a" stroke-width="2.2"><rect x="3.3" y="12.6" width="13.5" height="7.2" rx="0.8"/><path d="M14.6 12 V6.4 A4.2 4.4 0 0 0 6.3 5.2"/></g></svg>
<svg class="abs" style="left:2009px;top:1062px" width="8" height="24" viewBox="0 0 8 24"><circle cx="4" cy="3.5" r="2.5" fill="#555"/><circle cx="4" cy="10.9" r="2.5" fill="#555"/><circle cx="4" cy="18.4" r="2.5" fill="#555"/></svg>
<div class="tbb" style="left:272px;top:1092px;width:1767px"></div>
<div class="hline" style="left:112px;top:1134px;width:1927px"></div>
<svg class="abs" style="left:125px;top:1101px" width="26" height="26" viewBox="0 0 26 26"><path d="M13 1V25M1 13H25" stroke="#4e4e4e" stroke-width="3.6" fill="none"/></svg>
<svg class="abs" style="left:159px;top:1110px" width="14" height="8" viewBox="0 0 14 8"><path d="M0 0H14L7 8Z" fill="#555548"/></svg>
<div class="abs" style="left:1163px;top:1098px;width:635px;height:31px;border-radius:8px;background:#f0f0f0;box-shadow:inset 0 0 0 2px #a6a6a6"></div>
<div class="abs" style="left:1761px;top:1100px;width:35px;height:27px;border-radius:0 6px 6px 0;background:#cdcdcd;border-left:2px solid #a6a6a6;box-sizing:border-box"></div>
<svg class="abs" style="left:1767px;top:1101px" width="26" height="26" viewBox="0 0 24 24"><g fill="none" stroke="#555" stroke-width="2"><path d="M5 12 V3.5 a1.5 1.5 0 0 1 1.5 -1.5 H20 a1.5 1.5 0 0 1 1.5 1.5 V17 a1.5 1.5 0 0 1 -1.5 1.5 H12"/><rect x="2" y="14" width="8" height="8" fill="#cdcdcd"/><path d="M10 14 L17 7 M11.5 6.5 H17.5 V12.5"/></g></svg>
<svg class="abs" style="left:1171px;top:1106px" width="20" height="18" viewBox="0 0 20 18"><g fill="none" stroke="#6a6a6a" stroke-width="2.2"><circle cx="5.6" cy="8.6" r="4"/><path d="M8.6 11.6 L14 17" stroke-linecap="butt"/></g></svg>
<div class="vline" style="left:1802px;top:1093px;height:41px"></div>
<div class="vline" style="left:1854px;top:1093px;height:41px"></div>
<div class="vline" style="left:1906px;top:1093px;height:41px"></div>
<div class="vline" style="left:1958px;top:1093px;height:41px"></div>
<svg class="abs" style="left:1816px;top:1099px" width="26" height="28" viewBox="0 0 26 28"><rect x="3" y="0" width="13" height="13" fill="#555"/><path d="M18 6 L25.5 19 H11Z" fill="#555"/><circle cx="8" cy="20" r="7.2" fill="#555" stroke="#cbcbcb" stroke-width="1.5"/></svg>
<svg class="abs" style="left:1868px;top:1103px" width="22" height="22" viewBox="0 0 22 22"><path d="M1 12 L12 2 H20.5 V10.5 L10 21.5 Z" fill="#555"/><circle cx="16.5" cy="6.2" r="1.7" fill="#cbcbcb"/></svg>
<svg class="abs" style="left:1920px;top:1101px" width="25" height="24" viewBox="0 0 25 24"><path d="M12.5 0 L15.6 8.6 L24.8 8.9 L17.5 14.5 L20.1 23.3 L12.5 18.2 L4.9 23.3 L7.5 14.5 L0.2 8.9 L9.4 8.6 Z" fill="#8a8a8a"/></svg>
<svg class="abs" style="left:1969px;top:1100px" width="32" height="26" viewBox="0 0 32 26"><g fill="none" stroke="#555" stroke-width="2.2"><path d="M2 13 C8 3 24 3 30 13 C24 23 8 23 2 13Z"/><circle cx="16" cy="13" r="4.5" fill="#555"/><path d="M4 24 L28 2" stroke-width="2.6"/></g></svg>
<div class="t abs" style="left:2003px;top:1098px;height:32px;line-height:32px;letter-spacing:0">15</div>
<div class="abs" style="left:526px;top:1136px;width:2px;height:340px;background:#999"></div>
<div class="abs" style="left:112px;top:1230px;width:414px;height:32px;background:#afafaf"></div>
<svg class="abs" style="left:122px;top:1143px" width="16" height="18" viewBox="0 0 16 18"><path d="M1 1 L15 9 L1 17 Z" fill="#808080"/></svg>
<svg class="abs" style="left:147px;top:1139px" width="25" height="24" viewBox="0 0 25 24"><path d="M12.5 0 L15.6 8.6 L24.8 8.9 L17.5 14.5 L20.1 23.3 L12.5 18.2 L4.9 23.3 L7.5 14.5 L0.2 8.9 L9.4 8.6 Z" fill="#505050"/></svg>
<div class="t b abs" style="left:182px;top:1135px;height:32px;line-height:32px">Favorites</div>
<svg class="abs" style="left:120px;top:1207px" width="18" height="16" viewBox="0 0 18 16"><path d="M0 1H18L9 16Z" fill="#808080"/></svg>
<svg class="abs" style="left:147px;top:1203px" width="29" height="21" viewBox="0 0 29 21"><path d="M2 19 V3 a1.5 1.5 0 0 1 1.5 -1.5 H9.5 L12 4.5 H21.5 a1.5 1.5 0 0 1 1.5 1.5 V8" fill="none" stroke="#555" stroke-width="2"/><path d="M6.5 8.5 H28 L23.5 20 H1.5 Z" fill="#555"/></svg>
<div class="t b abs" style="left:182px;top:1197px;height:32px;line-height:32px">Assets</div>
<svg class="abs" style="left:176px;top:1236px" width="25" height="20" viewBox="0 0 25 20"><path d="M1 2.5 a2 2 0 0 1 2 -2 H9.5 L12.5 4.5 H22 a2 2 0 0 1 2 2 V17.5 a2 2 0 0 1 -2 2 H3 a2 2 0 0 1 -2 -2 Z" fill="#555"/></svg>
<div class="t abs" style="left:208px;top:1229px;height:32px;line-height:32px">Materials</div>
<svg class="abs" style="left:176px;top:1268px" width="25" height="20" viewBox="0 0 25 20"><path d="M1 2.5 a2 2 0 0 1 2 -2 H9.5 L12.5 4.5 H22 a2 2 0 0 1 2 2 V17.5 a2 2 0 0 1 -2 2 H3 a2 2 0 0 1 -2 -2 Z" fill="#555"/></svg>
<div class="t abs" style="left:208px;top:1261px;height:32px;line-height:32px">Scenes</div>
<svg class="abs" style="left:176px;top:1300px" width="25" height="20" viewBox="0 0 25 20"><path d="M1 2.5 a2 2 0 0 1 2 -2 H9.5 L12.5 4.5 H22 a2 2 0 0 1 2 2 V17.5 a2 2 0 0 1 -2 2 H3 a2 2 0 0 1 -2 -2 Z" fill="#555"/></svg>
<div class="t abs" style="left:208px;top:1293px;height:32px;line-height:32px">Tree_Textures</div>
<svg class="abs" style="left:122px;top:1333px" width="16" height="18" viewBox="0 0 16 18"><path d="M1 1 L15 9 L1 17 Z" fill="#808080"/></svg>
<svg class="abs" style="left:147px;top:1332px" width="25" height="20" viewBox="0 0 25 20"><path d="M1 2.5 a2 2 0 0 1 2 -2 H9.5 L12.5 4.5 H22 a2 2 0 0 1 2 2 V17.5 a2 2 0 0 1 -2 2 H3 a2 2 0 0 1 -2 -2 Z" fill="#555"/></svg>
<div class="t b abs" style="left:182px;top:1326px;height:32px;line-height:32px">Packages</div>
<div class="abs" style="left:528px;top:1136px;width:1511px;height:340px;background:#bfbfbf"></div>
<div class="abs" style="left:528px;top:1136px;width:1511px;height:40px;background:#d0d0d0;border-bottom:2px solid #b4b4b4;box-sizing:border-box"></div>
<div class="t abs" style="left:536px;top:1140px;height:32px;line-height:33px">Assets</div>
<svg class="abs" style="left:623px;top:1146px" width="12" height="20" viewBox="0 0 12 20"><path d="M2 2 L10 10 L2 18" stroke="#8a8a8a" stroke-width="2.6" fill="none"/></svg>
<div class="t b abs" style="left:646px;top:1140px;height:32px;line-height:33px">Materials</div>
<svg class="abs thumb" style="left:562px;top:1202px" width="120" height="120" viewBox="0 0 120 120"><rect width="120" height="120" fill="#525252"/><defs><filter id="lf61" color-interpolation-filters="sRGB" x="-0.02" y="-0.02" width="1.04" height="1.04"><feColorMatrix type="matrix" values="1.6570 0.5600 0 0 -0.8285 1.6570 0.5600 0 0 -0.8285 1.6570 0.5600 0 0 -0.8285 0 0 0 1 0"/><feComponentTransfer><feFuncR type="table" tableValues="0.0000 0.0106 0.0197 0.0284 0.0369 0.0450 0.0531 0.0610 0.0688 0.0765 0.0841 0.0916 0.0991 0.1064 0.1138 0.1211 0.1283 0.1355 0.1427 0.1498 0.1569"/><feFuncG type="table" tableValues="0.0000 0.0116 0.0217 0.0313 0.0405 0.0496 0.0584 0.0671 0.0756 0.0841 0.0925 0.1007 0.1090 0.1171 0.1252 0.1332 0.1412 0.1491 0.1569 0.1648 0.1725"/><feFuncB type="table" tableValues="0.0000 0.0587 0.1096 0.1579 0.2045 0.2500 0.2946 0.3384 0.3817 0.4243 0.4665 0.5083 0.5497 0.5908 0.6315 0.6720 0.7122 0.7521 0.7918 0.8313 0.8706"/></feComponentTransfer></filter><linearGradient id="lg62" x1="0.8536" y1="0.8536" x2="0.1464" y2="0.1464"><stop offset="0" stop-color="#000"/><stop offset="1" stop-color="#f00"/></linearGradient><clipPath id="cp63"><ellipse cx="60" cy="60" rx="55" ry="55"/></clipPath></defs><g clip-path="url(#cp63)"><g filter="url(#lf61)"><ellipse cx="60" cy="60" rx="57.00" ry="57.00" fill="url(#lg62)"/><ellipse cx="60" cy="60" rx="57.00" ry="57.00" fill="url(#zg)" style="mix-blend-mode:screen"/></g></g></svg>
<div class="abs lbl" style="left:546px;top:1328px;width:152px">Cold</div>
<svg class="abs thumb" style="left:714px;top:1202px" width="120" height="120" viewBox="0 0 120 120"><rect width="120" height="120" fill="#525252"/><circle cx="60" cy="60" r="4.6" fill="url(#gdot)"/></svg>
<div class="abs lbl" style="left:698px;top:1328px;width:152px">Ground</div>
<svg class="abs thumb" style="left:866px;top:1202px" width="120" height="120" viewBox="0 0 120 120"><rect width="120" height="120" fill="#525252"/><defs><filter id="lf64" color-interpolation-filters="sRGB" x="-0.02" y="-0.02" width="1.04" height="1.04"><feColorMatrix type="matrix" values="1.6570 0.5600 0 0 -0.8285 1.6570 0.5600 0 0 -0.8285 1.6570 0.5600 0 0 -0.8285 0 0 0 1 0"/><feComponentTransfer><feFuncR type="table" tableValues="0.0000 0.0566 0.1057 0.1522 0.1972 0.2410 0.2840 0.3262 0.3679 0.4090 0.4497 0.4900 0.5299 0.5695 0.6088 0.6478 0.6865 0.7250 0.7633 0.8014 0.8392"/><feFuncG type="table" tableValues="0.0000 0.0138 0.0257 0.0370 0.0479 0.0586 0.0690 0.0793 0.0894 0.0994 0.1093 0.1191 0.1288 0.1384 0.1479 0.1574 0.1668 0.1762 0.1855 0.1947 0.2039"/><feFuncB type="table" tableValues="0.0000 0.0111 0.0207 0.0299 0.0387 0.0473 0.0557 0.0640 0.0722 0.0803 0.0883 0.0962 0.1040 0.1118 0.1195 0.1271 0.1347 0.1423 0.1498 0.1573 0.1647"/></feComponentTransfer></filter><linearGradient id="lg65" x1="0.8536" y1="0.8536" x2="0.1464" y2="0.1464"><stop offset="0" stop-color="#000"/><stop offset="1" stop-color="#f00"/></linearGradient><clipPath id="cp66"><ellipse cx="60" cy="60" rx="55" ry="55"/></clipPath></defs><g clip-path="url(#cp66)"><g filter="url(#lf64)"><ellipse cx="60" cy="60" rx="57.00" ry="57.00" fill="url(#lg65)"/><ellipse cx="60" cy="60" rx="57.00" ry="57.00" fill="url(#zg)" style="mix-blend-mode:screen"/></g></g></svg>
<div class="abs lbl" style="left:850px;top:1328px;width:152px">Hot</div>
<svg class="abs thumb" style="left:1018px;top:1202px" width="120" height="120" viewBox="0 0 120 120"><rect x="0" y="0" width="120" height="120" fill="#6c9ba4"/></svg>
<div class="abs lbl" style="left:1002px;top:1328px;width:152px">Skybox</div>
<svg class="abs thumb" style="left:1170px;top:1202px" width="120" height="120" viewBox="0 0 120 120"><rect width="120" height="120" fill="#525252"/><defs><filter id="lf67" color-interpolation-filters="sRGB" x="-0.02" y="-0.02" width="1.04" height="1.04"><feColorMatrix type="matrix" values="1.6570 0.5600 0 0 -0.8285 1.6570 0.5600 0 0 -0.8285 1.6570 0.5600 0 0 -0.8285 0 0 0 1 0"/><feComponentTransfer><feFuncR type="table" tableValues="0.0000 0.0201 0.0375 0.0540 0.0700 0.0856 0.1009 0.1159 0.1307 0.1453 0.1597 0.1740 0.1882 0.2023 0.2162 0.2301 0.2438 0.2575 0.2711 0.2846 0.2980"/><feFuncG type="table" tableValues="0.0000 0.0439 0.0820 0.1180 0.1529 0.1869 0.2203 0.2531 0.2854 0.3173 0.3489 0.3801 0.4111 0.4418 0.4722 0.5025 0.5325 0.5624 0.5921 0.6216 0.6510"/><feFuncB type="table" tableValues="0.0000 0.0148 0.0276 0.0398 0.0516 0.0631 0.0743 0.0854 0.0963 0.1070 0.1177 0.1282 0.1387 0.1490 0.1593 0.1695 0.1797 0.1897 0.1997 0.2097 0.2196"/></feComponentTransfer></filter><linearGradient id="lg68" x1="0.8536" y1="0.8536" x2="0.1464" y2="0.1464"><stop offset="0" stop-color="#000"/><stop offset="1" stop-color="#f00"/></linearGradient><clipPath id="cp69"><ellipse cx="60" cy="60" rx="55" ry="55"/></clipPath></defs><g clip-path="url(#cp69)"><g filter="url(#lf67)"><ellipse cx="60" cy="60" rx="57.00" ry="57.00" fill="url(#lg68)"/><ellipse cx="60" cy="60" rx="57.00" ry="57.00" fill="url(#zg)" style="mix-blend-mode:screen"/></g></g></svg>
<div class="abs lbl" style="left:1154px;top:1328px;width:152px">Tree</div>
<div class="abs" style="left:528px;top:1434px;width:1511px;height:42px;background:#d0d0d0;border-top:2px solid #b4b4b4;box-sizing:border-box"></div>
<div class="abs" style="left:1897px;top:1453px;width:110px;height:4px;background:#8f8f8f"></div>
<div class="abs" style="left:1951px;top:1445px;width:20px;height:20px;border-radius:50%;background:#626262"></div>
<div class="abs" style="left:2376px;top:1480px;width:2px;height:40px;background:#999"></div>
<div class="abs" style="left:2428px;top:1480px;width:2px;height:40px;background:#999"></div>
<div class="abs" style="left:2480px;top:1480px;width:2px;height:40px;background:#999"></div>
<div class="abs" style="left:2532px;top:1480px;width:2px;height:40px;background:#999"></div>
<svg class="abs" style="left:2388px;top:1485px" width="30" height="30" viewBox="0 0 30 30"><g fill="#585858"><ellipse cx="15" cy="17.5" rx="8" ry="10"/><circle cx="15" cy="6.5" r="4.6"/></g><g stroke="#585858" stroke-width="3" fill="none"><path d="M2 10 L9 14 M1 18.5 H8 M2.5 27.5 L9 22.5 M28 10 L21 14 M29 18.5 H22 M27.5 27.5 L21 22.5 M9 1 L12 5 M21 1 L18 5"/></g><path d="M2 1 L29 29" stroke="#8d8d8d" stroke-width="2.2"/><path d="M4.5 1 L30 27.5" stroke="#585858" stroke-width="1.6"/></svg>
<svg class="abs" style="left:2440px;top:1485px" width="30" height="30" viewBox="0 0 30 30"><g fill="#585858"><ellipse cx="15" cy="6.5" rx="12" ry="5.5"/><path d="M3 11 a12 5.5 0 0 0 24 0 V15 a12 5.5 0 0 1 -24 0Z"/><path d="M3 19 a12 5.5 0 0 0 24 0 V23.5 a12 5.5 0 0 1 -24 0Z"/></g><path d="M2 1 L29 29" stroke="#8d8d8d" stroke-width="2.2"/><path d="M4.5 1 L30 27.5" stroke="#585858" stroke-width="1.6"/></svg>
<svg class="abs" style="left:2492px;top:1485px" width="30" height="30" viewBox="0 0 30 30"><g fill="none" stroke="#585858" stroke-width="2.2"><path d="M3.5 14 A11.5 11.5 0 0 1 22 5.5 M26.5 15 A11.5 11.5 0 0 1 8 24"/></g><path d="M24.5 1 L27 10.5 L18 8.5Z M5.5 29 L3 19.5 L12 21.5Z" fill="#585858"/><circle cx="15" cy="12.5" r="5.6" fill="#585858"/><path d="M12 17 H18 V20 a3 3 0 0 1 -6 0Z" fill="#585858"/><path d="M3 1 L28 28" stroke="#585858" stroke-width="2.4"/><path d="M5.2 0.5 L29.5 26.5" stroke="#8d8d8d" stroke-width="1.4"/></svg>
<svg class="abs" style="left:2544px;top:1485px" width="30" height="30" viewBox="0 0 30 30"><circle cx="15" cy="15" r="13" fill="none" stroke="#585858" stroke-width="2.2"/><path d="M9 15 L13.5 19.5 L21 11.5" fill="none" stroke="#585858" stroke-width="3.2"/></svg>
</div></div></body></html>
